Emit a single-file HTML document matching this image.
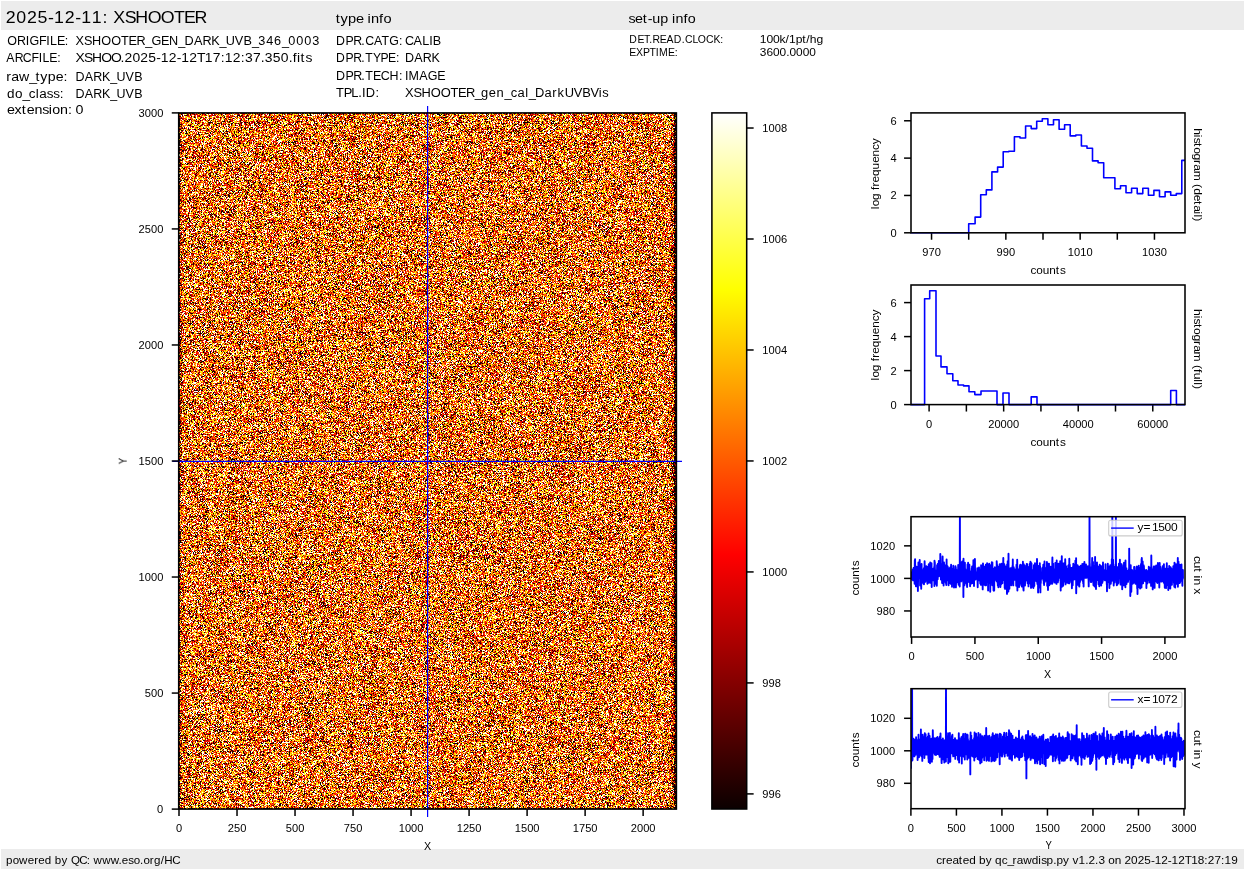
<!DOCTYPE html>
<html><head><meta charset="utf-8"><title>qc rawdisp</title>
<style>
html,body{margin:0;padding:0;background:#fff;overflow:hidden;}
svg{position:absolute;left:0;top:0;display:block;will-change:transform;}
text{font-family:"Liberation Sans",sans-serif;fill:#000;font-variant-ligatures:none;font-kerning:none;}
</style></head><body>
<canvas id="img" width="497" height="696" style="position:absolute;left:179px;top:113px;width:497px;height:696px;display:block;background:#d77c33"></canvas>
<svg width="1245" height="870" viewBox="0 0 1245 870">
<rect x="1.00" y="1.00" width="1243.00" height="29.00" fill="#ececec" stroke="none" stroke-width="0.00"/>
<rect x="1.00" y="849.00" width="1243.00" height="20.00" fill="#ececec" stroke="none" stroke-width="0.00"/>
<text x="0.00 9.68 19.37 29.05 38.74 44.23 53.91 63.60 69.09 78.77 88.46 93.58 98.42 108.85 118.51 129.96 141.94 153.92 163.22 172.83" y="0" font-size="16.30" transform="translate(5.80 22.80) translate(-0.00 0) scale(1.0922 1)">2025-12-11: XSHOOTER</text>
<text x="0.00 4.39 11.03 18.14 25.03 28.60 31.71 38.81 42.76" y="0" font-size="13.12" transform="translate(335.70 23.00) translate(-0.00 0) scale(1.1154 1)">type info</text>
<text x="0.00 5.97 13.01 17.50 21.64 28.90 36.17 39.81 42.99 50.25 54.28" y="0" font-size="13.12" transform="translate(628.60 22.70) translate(-0.00 0) scale(1.0914 1)">set-up info</text>
<text x="0.00 10.33 19.44 23.31 33.47 41.02 44.89 52.20 60.48" y="0" font-size="13.12" transform="translate(7.20 44.70) translate(-0.00 0) scale(0.9529 1)">ORIGFILE:</text>
<text x="0.00 8.86 17.06 26.78 36.96 47.13 55.03 63.20 72.18 78.65 88.66 96.83 106.50 112.97 122.66 131.50 140.49 148.96 155.43 164.89 173.73 182.60 189.07 197.29 205.52 213.74 220.21 228.43 236.66 244.88" y="0" font-size="13.12" transform="translate(75.40 44.70) translate(-0.00 0) scale(0.9669 1)">XSHOOTER_GEN_DARK_UVB_346_0003</text>
<text x="0.00 9.14 17.75 27.07 34.76 38.69 46.14 54.57" y="0" font-size="13.12" transform="translate(6.20 61.80) translate(-0.00 0) scale(0.9359 1)">ARCFILE:</text>
<text x="0.00 8.08 15.57 24.44 33.73 42.54 46.29 53.80 61.30 68.81 76.31 80.57 88.08 95.58 99.84 107.34 114.85 122.06 129.56 137.07 141.04 148.55 156.05 160.03 167.53 175.04 178.79 186.30 193.80 201.31 205.06 209.21 212.49 217.11" y="0" font-size="13.12" transform="translate(75.40 61.80) translate(-0.00 0) scale(1.0596 1)">XSHOO.2025-12-12T17:12:37.350.fits</text>
<text x="0.00 4.76 11.86 21.33 27.12 31.67 38.52 45.87 53.00" y="0" font-size="13.12" transform="translate(6.20 80.50) translate(-0.00 0) scale(1.0792 1)">raw_type:</text>
<text x="0.00 9.85 18.83 27.95 36.56 43.12 52.73 61.71" y="0" font-size="13.12" transform="translate(75.40 80.50) translate(-0.00 0) scale(0.9521 1)">DARK_UVB</text>
<text x="0.00 7.71 15.14 21.21 27.89 31.26 38.70 45.03 51.36" y="0" font-size="13.12" transform="translate(7.00 97.80) translate(-0.00 0) scale(1.0293 1)">do_class:</text>
<text x="0.00 9.85 18.83 27.95 36.56 43.12 52.73 61.71" y="0" font-size="13.12" transform="translate(75.40 97.80) translate(-0.00 0) scale(0.9521 1)">DARK_UVB</text>
<text x="0.00 6.83 13.63 18.13 25.19 32.47 38.45 41.64 48.66 55.93" y="0" font-size="13.12" transform="translate(7.00 113.50) translate(-0.00 0) scale(1.0889 1)">extension:</text>
<text x="0.00" y="0" font-size="13.12" transform="translate(75.40 113.50) translate(-0.00 0) scale(1.0895 1)">0</text>
<text x="0.00 10.23 18.25 26.95 31.18 40.46 48.49 56.61 66.91" y="0" font-size="13.12" transform="translate(336.00 44.70) translate(-0.00 0) scale(0.9405 1)">DPR.CATG:</text>
<text x="0.00 9.07 17.95 25.19 29.02" y="0" font-size="13.12" transform="translate(404.90 44.70) translate(-0.00 0) scale(0.9624 1)">CALIB</text>
<text x="0.00 10.37 18.50 27.32 31.60 39.83 48.06 56.19 64.70" y="0" font-size="13.12" transform="translate(336.00 61.80) translate(-0.00 0) scale(0.9278 1)">DPR.TYPE:</text>
<text x="0.00 9.81 18.76 27.85" y="0" font-size="13.12" transform="translate(404.90 61.80) translate(-0.00 0) scale(0.9554 1)">DARK</text>
<text x="0.00 10.13 18.05 26.66 30.84 38.88 47.19 56.37 66.25" y="0" font-size="13.12" transform="translate(336.00 80.00) translate(-0.00 0) scale(0.9506 1)">DPR.TECH:</text>
<text x="0.00 3.86 15.16 23.85 33.99" y="0" font-size="13.12" transform="translate(404.90 80.00) translate(-0.00 0) scale(0.9549 1)">IMAGE</text>
<text x="0.00 7.79 15.47 22.57 26.62 30.38 40.20" y="0" font-size="13.12" transform="translate(336.00 97.30) translate(-0.00 0) scale(0.9808 1)">TPL.ID:</text>
<text x="0.00 8.70 16.76 26.31 36.31 46.30 54.06 62.08 70.91 77.26 85.32 93.13 101.18 107.53 114.51 122.30 125.83 132.18 141.95 149.74 154.96 162.31 171.61 180.30 188.63 197.06 200.59" y="0" font-size="13.12" transform="translate(404.90 97.30) translate(-0.00 0) scale(0.9843 1)">XSHOOTER_gen_cal_DarkUVBVis</text>
<text x="0.00 8.54 15.54 20.99 24.52 32.22 39.22 46.81 55.34 58.87 66.61 72.39 81.11 88.85 96.12" y="0" font-size="11.03" transform="translate(629.30 42.90) translate(-0.00 0) scale(0.9472 1)">DET.READ.CLOCK:</text>
<text x="0.00 5.95 11.89 17.84 23.25 26.39 32.34 38.27 41.93 45.08 51.01" y="0" font-size="10.92" transform="translate(759.80 43.00) translate(-0.00 0) scale(1.1103 1)">100k/1pt/hg</text>
<text x="0.00 6.98 14.55 21.21 27.96 31.22 40.76 47.74" y="0" font-size="11.03" transform="translate(629.30 55.80) translate(-0.00 0) scale(0.9503 1)">EXPTIME:</text>
<text x="0.00 6.06 12.12 18.18 24.23 27.26 33.32 39.38 45.44" y="0" font-size="10.92" transform="translate(759.80 55.90) translate(-0.00 0) scale(1.0895 1)">3600.0000</text>
<text x="0.00 6.30 12.37 20.48 26.58 30.42 36.53 42.83 45.98 52.28 58.15 61.30 69.11 76.04 79.38 82.53 90.65 98.76 105.92 109.07 115.18 120.34 126.29 129.45 135.52 139.48 145.77 149.12 156.58" y="0" font-size="10.92" transform="translate(6.00 864.10) translate(-0.00 0) scale(1.0615 1)">powered by QC: www.eso.org/HC</text>
<text x="0.00 5.28 9.00 14.91 20.80 24.57 30.48 36.57 39.63 45.73 51.41 54.47 60.57 65.85 70.65 74.60 80.49 88.35 94.44 97.11 102.12 108.22 111.27 117.37 123.06 126.11 131.79 137.91 140.96 147.07 150.13 156.24 159.29 165.17 171.26 174.31 180.43 186.54 192.65 198.76 202.23 208.34 214.46 217.92 224.04 230.15 236.02 242.13 248.24 251.48 257.59 263.70 266.94 273.05" y="0" font-size="10.92" transform="translate(1238.50 864.10) translate(-302.22 0) scale(1.0799 1)">created by qc_rawdisp.py v1.2.3 on 2025-12-12T18:27:19</text>
<line x1="427.60" y1="106.00" x2="427.60" y2="817.00" stroke="#0000ff" stroke-width="1.20"/>
<line x1="172.40" y1="461.30" x2="682.00" y2="461.30" stroke="#0000ff" stroke-width="1.20"/>
<rect x="178.70" y="112.90" width="497.70" height="696.20" fill="none" stroke="#000" stroke-width="1.55"/>
<line x1="171.76" y1="809.10" x2="178.70" y2="809.10" stroke="#000" stroke-width="1.50"/>
<text x="0.00" y="0" font-size="10.21" transform="translate(163.30 812.70) translate(-6.18 0) scale(1.0895 1)">0</text>
<line x1="171.76" y1="693.07" x2="178.70" y2="693.07" stroke="#000" stroke-width="1.50"/>
<text x="0.00 5.69 11.39" y="0" font-size="10.21" transform="translate(163.30 696.67) translate(-18.55 0) scale(1.0895 1)">500</text>
<line x1="171.76" y1="577.03" x2="178.70" y2="577.03" stroke="#000" stroke-width="1.50"/>
<text x="0.00 5.69 11.39 17.08" y="0" font-size="10.21" transform="translate(163.30 580.63) translate(-24.74 0) scale(1.0895 1)">1000</text>
<line x1="171.76" y1="461.00" x2="178.70" y2="461.00" stroke="#000" stroke-width="1.50"/>
<text x="0.00 5.69 11.39 17.08" y="0" font-size="10.21" transform="translate(163.30 464.60) translate(-24.74 0) scale(1.0895 1)">1500</text>
<line x1="171.76" y1="344.97" x2="178.70" y2="344.97" stroke="#000" stroke-width="1.50"/>
<text x="0.00 5.69 11.39 17.08" y="0" font-size="10.21" transform="translate(163.30 348.57) translate(-24.74 0) scale(1.0895 1)">2000</text>
<line x1="171.76" y1="228.93" x2="178.70" y2="228.93" stroke="#000" stroke-width="1.50"/>
<text x="0.00 5.69 11.39 17.08" y="0" font-size="10.21" transform="translate(163.30 232.53) translate(-24.74 0) scale(1.0895 1)">2500</text>
<line x1="171.76" y1="112.90" x2="178.70" y2="112.90" stroke="#000" stroke-width="1.50"/>
<text x="0.00 5.69 11.39 17.08" y="0" font-size="10.21" transform="translate(163.30 116.50) translate(-24.74 0) scale(1.0895 1)">3000</text>
<line x1="179.00" y1="809.10" x2="179.00" y2="816.04" stroke="#000" stroke-width="1.50"/>
<text x="0.00" y="0" font-size="10.21" transform="translate(179.00 831.70) translate(-3.09 0) scale(1.0895 1)">0</text>
<line x1="237.02" y1="809.10" x2="237.02" y2="816.04" stroke="#000" stroke-width="1.50"/>
<text x="0.00 5.69 11.39" y="0" font-size="10.21" transform="translate(237.02 831.70) translate(-9.28 0) scale(1.0895 1)">250</text>
<line x1="295.03" y1="809.10" x2="295.03" y2="816.04" stroke="#000" stroke-width="1.50"/>
<text x="0.00 5.69 11.39" y="0" font-size="10.21" transform="translate(295.03 831.70) translate(-9.28 0) scale(1.0895 1)">500</text>
<line x1="353.05" y1="809.10" x2="353.05" y2="816.04" stroke="#000" stroke-width="1.50"/>
<text x="0.00 5.69 11.39" y="0" font-size="10.21" transform="translate(353.05 831.70) translate(-9.28 0) scale(1.0895 1)">750</text>
<line x1="411.07" y1="809.10" x2="411.07" y2="816.04" stroke="#000" stroke-width="1.50"/>
<text x="0.00 5.69 11.39 17.08" y="0" font-size="10.21" transform="translate(411.07 831.70) translate(-12.37 0) scale(1.0895 1)">1000</text>
<line x1="469.08" y1="809.10" x2="469.08" y2="816.04" stroke="#000" stroke-width="1.50"/>
<text x="0.00 5.69 11.39 17.08" y="0" font-size="10.21" transform="translate(469.08 831.70) translate(-12.37 0) scale(1.0895 1)">1250</text>
<line x1="527.10" y1="809.10" x2="527.10" y2="816.04" stroke="#000" stroke-width="1.50"/>
<text x="0.00 5.69 11.39 17.08" y="0" font-size="10.21" transform="translate(527.10 831.70) translate(-12.37 0) scale(1.0895 1)">1500</text>
<line x1="585.12" y1="809.10" x2="585.12" y2="816.04" stroke="#000" stroke-width="1.50"/>
<text x="0.00 5.69 11.39 17.08" y="0" font-size="10.21" transform="translate(585.12 831.70) translate(-12.37 0) scale(1.0895 1)">1750</text>
<line x1="643.13" y1="809.10" x2="643.13" y2="816.04" stroke="#000" stroke-width="1.50"/>
<text x="0.00 5.69 11.39 17.08" y="0" font-size="10.21" transform="translate(643.13 831.70) translate(-12.37 0) scale(1.0895 1)">2000</text>
<text x="0.00" y="0" font-size="10.92" transform="translate(427.50 850.00) translate(-3.56 0) scale(0.9781 1)">X</text>
<text x="0.00" y="0" font-size="10.92" transform="translate(126.70 461.00) rotate(-90) translate(-3.18 0) scale(0.8721 1)">Y</text>
<defs><linearGradient id="hot" x1="0" y1="1" x2="0" y2="0"><stop offset="0" stop-color="rgb(11,0,0)"/><stop offset="0.365079" stop-color="rgb(255,0,0)"/><stop offset="0.746032" stop-color="rgb(255,255,0)"/><stop offset="1" stop-color="rgb(255,255,255)"/></linearGradient></defs>
<rect x="711.90" y="112.90" width="34.80" height="696.10" fill="url(#hot)" stroke="#000" stroke-width="1.55"/>
<line x1="746.70" y1="793.90" x2="753.64" y2="793.90" stroke="#000" stroke-width="1.50"/>
<text x="0.00 5.69 11.39" y="0" font-size="10.21" transform="translate(762.30 797.50) translate(-0.00 0) scale(1.0895 1)">996</text>
<line x1="746.70" y1="682.92" x2="753.64" y2="682.92" stroke="#000" stroke-width="1.50"/>
<text x="0.00 5.69 11.39" y="0" font-size="10.21" transform="translate(762.30 686.52) translate(-0.00 0) scale(1.0895 1)">998</text>
<line x1="746.70" y1="571.94" x2="753.64" y2="571.94" stroke="#000" stroke-width="1.50"/>
<text x="0.00 5.69 11.39 17.08" y="0" font-size="10.21" transform="translate(762.30 575.54) translate(-0.00 0) scale(1.0895 1)">1000</text>
<line x1="746.70" y1="460.96" x2="753.64" y2="460.96" stroke="#000" stroke-width="1.50"/>
<text x="0.00 5.69 11.39 17.08" y="0" font-size="10.21" transform="translate(762.30 464.56) translate(-0.00 0) scale(1.0895 1)">1002</text>
<line x1="746.70" y1="349.98" x2="753.64" y2="349.98" stroke="#000" stroke-width="1.50"/>
<text x="0.00 5.69 11.39 17.08" y="0" font-size="10.21" transform="translate(762.30 353.58) translate(-0.00 0) scale(1.0895 1)">1004</text>
<line x1="746.70" y1="239.00" x2="753.64" y2="239.00" stroke="#000" stroke-width="1.50"/>
<text x="0.00 5.69 11.39 17.08" y="0" font-size="10.21" transform="translate(762.30 242.60) translate(-0.00 0) scale(1.0895 1)">1006</text>
<line x1="746.70" y1="128.02" x2="753.64" y2="128.02" stroke="#000" stroke-width="1.50"/>
<text x="0.00 5.69 11.39 17.08" y="0" font-size="10.21" transform="translate(762.30 131.62) translate(-0.00 0) scale(1.0895 1)">1008</text>
<line x1="931.55" y1="232.80" x2="931.55" y2="239.74" stroke="#000" stroke-width="1.50"/>
<text x="0.00 5.69 11.39" y="0" font-size="10.21" transform="translate(931.55 255.80) translate(-9.28 0) scale(1.0895 1)">970</text>
<line x1="968.70" y1="232.80" x2="968.70" y2="239.74" stroke="#000" stroke-width="1.50"/>
<line x1="1005.85" y1="232.80" x2="1005.85" y2="239.74" stroke="#000" stroke-width="1.50"/>
<text x="0.00 5.69 11.39" y="0" font-size="10.21" transform="translate(1005.85 255.80) translate(-9.28 0) scale(1.0895 1)">990</text>
<line x1="1043.00" y1="232.80" x2="1043.00" y2="239.74" stroke="#000" stroke-width="1.50"/>
<line x1="1080.15" y1="232.80" x2="1080.15" y2="239.74" stroke="#000" stroke-width="1.50"/>
<text x="0.00 5.69 11.39 17.08" y="0" font-size="10.21" transform="translate(1080.15 255.80) translate(-12.37 0) scale(1.0895 1)">1010</text>
<line x1="1117.30" y1="232.80" x2="1117.30" y2="239.74" stroke="#000" stroke-width="1.50"/>
<line x1="1154.45" y1="232.80" x2="1154.45" y2="239.74" stroke="#000" stroke-width="1.50"/>
<text x="0.00 5.69 11.39 17.08" y="0" font-size="10.21" transform="translate(1154.45 255.80) translate(-12.37 0) scale(1.0895 1)">1030</text>
<line x1="904.06" y1="232.80" x2="911.00" y2="232.80" stroke="#000" stroke-width="1.50"/>
<text x="0.00" y="0" font-size="10.21" transform="translate(896.60 236.70) translate(-6.18 0) scale(1.0895 1)">0</text>
<line x1="904.06" y1="195.46" x2="911.00" y2="195.46" stroke="#000" stroke-width="1.50"/>
<text x="0.00" y="0" font-size="10.21" transform="translate(896.60 199.36) translate(-6.18 0) scale(1.0895 1)">2</text>
<line x1="904.06" y1="158.12" x2="911.00" y2="158.12" stroke="#000" stroke-width="1.50"/>
<text x="0.00" y="0" font-size="10.21" transform="translate(896.60 162.02) translate(-6.18 0) scale(1.0895 1)">4</text>
<line x1="904.06" y1="120.78" x2="911.00" y2="120.78" stroke="#000" stroke-width="1.50"/>
<text x="0.00" y="0" font-size="10.21" transform="translate(896.60 124.68) translate(-6.18 0) scale(1.0895 1)">6</text>
<text x="0.00 5.28 11.16 17.24 23.33 27.09" y="0" font-size="10.92" transform="translate(1048.00 274.00) translate(-17.38 0) scale(1.0804 1)">counts</text>
<text x="0.00 2.65 8.49 14.54 17.57 20.93 24.62 30.49 36.54 42.59 48.45 54.50 59.74" y="0" font-size="10.92" transform="translate(879.30 173.50) rotate(-90) translate(-35.66 0) scale(1.0878 1)">log frequency</text>
<text x="0.00 5.94 8.55 13.43 17.10 22.84 28.79 32.64 38.39 47.52 50.50 54.15 60.10 65.87 69.55 75.29 77.89 80.50" y="0" font-size="10.92" transform="translate(1194.00 174.90) rotate(90) translate(-46.69 0) scale(1.1068 1)">histogram (detail)</text>
<line x1="929.10" y1="404.60" x2="929.10" y2="411.54" stroke="#000" stroke-width="1.50"/>
<text x="0.00" y="0" font-size="10.21" transform="translate(929.10 428.10) translate(-3.09 0) scale(1.0895 1)">0</text>
<line x1="966.38" y1="404.60" x2="966.38" y2="411.54" stroke="#000" stroke-width="1.50"/>
<line x1="1003.66" y1="404.60" x2="1003.66" y2="411.54" stroke="#000" stroke-width="1.50"/>
<text x="0.00 5.69 11.39 17.08 22.77" y="0" font-size="10.21" transform="translate(1003.66 428.10) translate(-15.46 0) scale(1.0895 1)">20000</text>
<line x1="1040.94" y1="404.60" x2="1040.94" y2="411.54" stroke="#000" stroke-width="1.50"/>
<line x1="1078.22" y1="404.60" x2="1078.22" y2="411.54" stroke="#000" stroke-width="1.50"/>
<text x="0.00 5.69 11.39 17.08 22.77" y="0" font-size="10.21" transform="translate(1078.22 428.10) translate(-15.46 0) scale(1.0895 1)">40000</text>
<line x1="1115.50" y1="404.60" x2="1115.50" y2="411.54" stroke="#000" stroke-width="1.50"/>
<line x1="1152.78" y1="404.60" x2="1152.78" y2="411.54" stroke="#000" stroke-width="1.50"/>
<text x="0.00 5.69 11.39 17.08 22.77" y="0" font-size="10.21" transform="translate(1152.78 428.10) translate(-15.46 0) scale(1.0895 1)">60000</text>
<line x1="904.06" y1="404.60" x2="911.00" y2="404.60" stroke="#000" stroke-width="1.50"/>
<text x="0.00" y="0" font-size="10.21" transform="translate(896.60 408.50) translate(-6.18 0) scale(1.0895 1)">0</text>
<line x1="904.06" y1="370.60" x2="911.00" y2="370.60" stroke="#000" stroke-width="1.50"/>
<text x="0.00" y="0" font-size="10.21" transform="translate(896.60 374.50) translate(-6.18 0) scale(1.0895 1)">2</text>
<line x1="904.06" y1="336.60" x2="911.00" y2="336.60" stroke="#000" stroke-width="1.50"/>
<text x="0.00" y="0" font-size="10.21" transform="translate(896.60 340.50) translate(-6.18 0) scale(1.0895 1)">4</text>
<line x1="904.06" y1="302.60" x2="911.00" y2="302.60" stroke="#000" stroke-width="1.50"/>
<text x="0.00" y="0" font-size="10.21" transform="translate(896.60 306.50) translate(-6.18 0) scale(1.0895 1)">6</text>
<text x="0.00 5.28 11.16 17.24 23.33 27.09" y="0" font-size="10.92" transform="translate(1048.00 446.00) translate(-17.38 0) scale(1.0804 1)">counts</text>
<text x="0.00 2.65 8.49 14.54 17.57 20.93 24.62 30.49 36.54 42.59 48.45 54.50 59.74" y="0" font-size="10.92" transform="translate(879.30 344.80) rotate(-90) translate(-35.66 0) scale(1.0878 1)">log frequency</text>
<text x="0.00 5.92 8.52 13.39 17.05 22.77 28.70 32.54 38.27 47.37 50.34 53.99 57.28 63.20 65.80 68.39" y="0" font-size="10.92" transform="translate(1194.00 349.20) rotate(90) translate(-40.09 0) scale(1.1102 1)">histogram (full)</text>
<line x1="911.60" y1="637.00" x2="911.60" y2="643.94" stroke="#000" stroke-width="1.50"/>
<text x="0.00" y="0" font-size="10.21" transform="translate(911.60 660.40) translate(-3.09 0) scale(1.0895 1)">0</text>
<line x1="974.93" y1="637.00" x2="974.93" y2="643.94" stroke="#000" stroke-width="1.50"/>
<text x="0.00 5.69 11.39" y="0" font-size="10.21" transform="translate(974.93 660.40) translate(-9.28 0) scale(1.0895 1)">500</text>
<line x1="1038.25" y1="637.00" x2="1038.25" y2="643.94" stroke="#000" stroke-width="1.50"/>
<text x="0.00 5.69 11.39 17.08" y="0" font-size="10.21" transform="translate(1038.25 660.40) translate(-12.37 0) scale(1.0895 1)">1000</text>
<line x1="1101.58" y1="637.00" x2="1101.58" y2="643.94" stroke="#000" stroke-width="1.50"/>
<text x="0.00 5.69 11.39 17.08" y="0" font-size="10.21" transform="translate(1101.58 660.40) translate(-12.37 0) scale(1.0895 1)">1500</text>
<line x1="1164.90" y1="637.00" x2="1164.90" y2="643.94" stroke="#000" stroke-width="1.50"/>
<text x="0.00 5.69 11.39 17.08" y="0" font-size="10.21" transform="translate(1164.90 660.40) translate(-12.37 0) scale(1.0895 1)">2000</text>
<line x1="904.06" y1="610.95" x2="911.00" y2="610.95" stroke="#000" stroke-width="1.50"/>
<text x="0.00 5.69 11.39" y="0" font-size="10.21" transform="translate(895.10 615.05) translate(-18.55 0) scale(1.0895 1)">980</text>
<line x1="904.06" y1="578.40" x2="911.00" y2="578.40" stroke="#000" stroke-width="1.50"/>
<text x="0.00 5.69 11.39 17.08" y="0" font-size="10.21" transform="translate(895.10 582.50) translate(-24.74 0) scale(1.0895 1)">1000</text>
<line x1="904.06" y1="545.85" x2="911.00" y2="545.85" stroke="#000" stroke-width="1.50"/>
<text x="0.00 5.69 11.39 17.08" y="0" font-size="10.21" transform="translate(895.10 549.95) translate(-24.74 0) scale(1.0895 1)">1020</text>
<text x="0.00" y="0" font-size="10.92" transform="translate(1047.50 678.30) translate(-3.56 0) scale(0.9781 1)">X</text>
<text x="0.00 5.28 11.16 17.24 23.33 27.09" y="0" font-size="10.92" transform="translate(859.30 578.00) rotate(-90) translate(-17.38 0) scale(1.0804 1)">counts</text>
<text x="0.00 5.11 11.00 14.64 17.59 20.17 26.06 29.01" y="0" font-size="10.92" transform="translate(1194.00 575.20) rotate(90) translate(-19.32 0) scale(1.1167 1)">cut in x</text>
<line x1="910.90" y1="808.70" x2="910.90" y2="815.64" stroke="#000" stroke-width="1.50"/>
<text x="0.00" y="0" font-size="10.21" transform="translate(910.90 831.60) translate(-3.09 0) scale(1.0895 1)">0</text>
<line x1="956.41" y1="808.70" x2="956.41" y2="815.64" stroke="#000" stroke-width="1.50"/>
<text x="0.00 5.69 11.39" y="0" font-size="10.21" transform="translate(956.41 831.60) translate(-9.28 0) scale(1.0895 1)">500</text>
<line x1="1001.93" y1="808.70" x2="1001.93" y2="815.64" stroke="#000" stroke-width="1.50"/>
<text x="0.00 5.69 11.39 17.08" y="0" font-size="10.21" transform="translate(1001.93 831.60) translate(-12.37 0) scale(1.0895 1)">1000</text>
<line x1="1047.44" y1="808.70" x2="1047.44" y2="815.64" stroke="#000" stroke-width="1.50"/>
<text x="0.00 5.69 11.39 17.08" y="0" font-size="10.21" transform="translate(1047.44 831.60) translate(-12.37 0) scale(1.0895 1)">1500</text>
<line x1="1092.96" y1="808.70" x2="1092.96" y2="815.64" stroke="#000" stroke-width="1.50"/>
<text x="0.00 5.69 11.39 17.08" y="0" font-size="10.21" transform="translate(1092.96 831.60) translate(-12.37 0) scale(1.0895 1)">2000</text>
<line x1="1138.47" y1="808.70" x2="1138.47" y2="815.64" stroke="#000" stroke-width="1.50"/>
<text x="0.00 5.69 11.39 17.08" y="0" font-size="10.21" transform="translate(1138.47 831.60) translate(-12.37 0) scale(1.0895 1)">2500</text>
<line x1="1183.99" y1="808.70" x2="1183.99" y2="815.64" stroke="#000" stroke-width="1.50"/>
<text x="0.00 5.69 11.39 17.08" y="0" font-size="10.21" transform="translate(1183.99 831.60) translate(-12.37 0) scale(1.0895 1)">3000</text>
<line x1="904.06" y1="783.30" x2="911.00" y2="783.30" stroke="#000" stroke-width="1.50"/>
<text x="0.00 5.69 11.39" y="0" font-size="10.21" transform="translate(895.10 787.40) translate(-18.55 0) scale(1.0895 1)">980</text>
<line x1="904.06" y1="750.80" x2="911.00" y2="750.80" stroke="#000" stroke-width="1.50"/>
<text x="0.00 5.69 11.39 17.08" y="0" font-size="10.21" transform="translate(895.10 754.90) translate(-24.74 0) scale(1.0895 1)">1000</text>
<line x1="904.06" y1="718.30" x2="911.00" y2="718.30" stroke="#000" stroke-width="1.50"/>
<text x="0.00 5.69 11.39 17.08" y="0" font-size="10.21" transform="translate(895.10 722.40) translate(-24.74 0) scale(1.0895 1)">1020</text>
<text x="0.00" y="0" font-size="10.92" transform="translate(1048.80 849.00) translate(-3.18 0) scale(0.8721 1)">Y</text>
<text x="0.00 5.28 11.16 17.24 23.33 27.09" y="0" font-size="10.92" transform="translate(859.30 750.00) rotate(-90) translate(-17.38 0) scale(1.0804 1)">counts</text>
<text x="0.00 5.11 11.00 14.64 17.59 20.17 26.06 29.01" y="0" font-size="10.92" transform="translate(1194.00 749.40) rotate(90) translate(-19.32 0) scale(1.1167 1)">cut in y</text>
<path d="M911.0 232.8 L968.7 232.8 L968.7 223.8 L975.1 223.8 L975.1 217.1 L980.7 217.1 L980.7 194.7 L986.3 194.7 L986.3 189.9 L991.9 189.9 L991.9 171.9 L997.6 171.9 L997.6 167.1 L1003.2 167.1 L1003.2 151.8 L1008.8 151.8 L1008.8 151.2 L1014.4 151.2 L1014.4 136.8 L1020.0 136.8 L1020.0 138.0 L1025.6 138.0 L1025.6 126.0 L1031.2 126.0 L1031.2 128.6 L1036.7 128.6 L1036.7 121.2 L1042.3 121.2 L1042.3 118.7 L1047.9 118.7 L1047.9 124.7 L1053.5 124.7 L1053.5 119.7 L1059.1 119.7 L1059.1 129.2 L1064.6 129.2 L1064.6 124.7 L1070.2 124.7 L1070.2 135.9 L1075.8 135.9 L1075.8 135.0 L1081.4 135.0 L1081.4 146.0 L1087.0 146.0 L1087.0 148.2 L1092.5 148.2 L1092.5 160.9 L1098.1 160.9 L1098.1 162.8 L1103.7 162.8 L1103.7 177.7 L1109.3 177.7 L1109.3 177.7 L1114.9 177.7 L1114.9 188.7 L1120.5 188.7 L1120.5 185.8 L1126.0 185.8 L1126.0 192.7 L1131.6 192.7 L1131.6 188.2 L1137.2 188.2 L1137.2 193.6 L1142.8 193.6 L1142.8 188.2 L1148.4 188.2 L1148.4 195.3 L1153.9 195.3 L1153.9 190.4 L1159.5 190.4 L1159.5 196.8 L1165.1 196.8 L1165.1 191.9 L1170.7 191.9 L1170.7 195.3 L1176.3 195.3 L1176.3 193.6 L1181.8 193.6 L1181.8 160.4 L1185.0 160.4" fill="none" stroke="#0000ff" stroke-width="1.6" stroke-linejoin="round"/>
<path d="M911.0 404.6 L924.6 404.6 L924.6 298.8 L929.7 298.8 L929.7 290.8 L936.0 290.8 L936.0 356.0 L941.0 356.0 L941.0 366.9 L947.0 366.9 L947.0 373.8 L952.8 373.8 L952.8 380.8 L958.0 380.8 L958.0 385.0 L963.6 385.0 L963.6 385.9 L969.0 385.9 L969.0 391.7 L974.8 391.7 L974.8 394.6 L981.0 394.6 L981.0 391.0 L997.0 391.0 L997.0 404.6 L1003.0 404.6 L1003.0 393.0 L1009.0 393.0 L1009.0 404.6 L1031.2 404.6 L1031.2 396.9 L1037.0 396.9 L1037.0 404.6 L1170.7 404.6 L1170.7 390.5 L1176.4 390.5 L1176.4 404.6 L1185.0 404.6" fill="none" stroke="#0000ff" stroke-width="1.6" stroke-linejoin="round"/>
<clipPath id="c3"><rect x="911.0" y="516.7" width="274.0" height="120.3"/></clipPath>
<path clip-path="url(#c3)" d="M911.6 575.5 L911.7 574.2 L911.9 572.2 L912.0 579.5 L912.1 577.5 L912.2 571.5 L912.4 578.2 L912.5 576.2 L912.6 569.7 L912.7 569.8 L912.9 578.4 L913.0 576.2 L913.1 580.4 L913.2 576.7 L913.4 571.9 L913.5 575.4 L913.6 568.0 L913.8 575.6 L913.9 578.3 L914.0 574.7 L914.1 575.5 L914.3 578.8 L914.4 575.4 L914.5 573.5 L914.6 583.7 L914.8 560.2 L914.9 564.0 L915.0 576.1 L915.1 559.2 L915.3 574.3 L915.4 567.0 L915.5 582.8 L915.7 573.4 L915.8 572.0 L915.9 586.3 L916.0 567.7 L916.2 584.0 L916.3 579.7 L916.4 573.8 L916.5 566.8 L916.7 577.7 L916.8 586.4 L916.9 573.0 L917.0 579.1 L917.2 571.5 L917.3 577.9 L917.4 572.0 L917.6 582.5 L917.7 571.3 L917.8 566.7 L917.9 591.0 L918.1 576.5 L918.2 570.9 L918.3 573.7 L918.4 562.4 L918.6 575.9 L918.7 571.9 L918.8 570.9 L918.9 578.3 L919.1 575.6 L919.2 575.6 L919.3 572.8 L919.5 575.3 L919.6 577.2 L919.7 560.0 L919.8 575.2 L920.0 572.0 L920.1 585.5 L920.2 581.3 L920.3 567.4 L920.5 574.1 L920.6 582.1 L920.7 566.2 L920.8 571.2 L921.0 578.8 L921.1 566.7 L921.2 588.8 L921.4 567.0 L921.5 571.3 L921.6 564.0 L921.7 577.3 L921.9 582.5 L922.0 571.2 L922.1 572.8 L922.2 570.0 L922.4 575.6 L922.5 571.9 L922.6 570.1 L922.7 582.3 L922.9 576.5 L923.0 574.1 L923.1 574.6 L923.3 578.8 L923.4 574.6 L923.5 583.8 L923.6 581.9 L923.8 568.3 L923.9 570.3 L924.0 584.2 L924.1 568.3 L924.3 568.2 L924.4 576.6 L924.5 574.1 L924.6 561.3 L924.8 568.9 L924.9 573.7 L925.0 577.9 L925.2 572.2 L925.3 578.0 L925.4 581.8 L925.5 574.6 L925.7 567.9 L925.8 576.7 L925.9 580.0 L926.0 568.1 L926.2 571.7 L926.3 571.6 L926.4 566.1 L926.5 573.6 L926.7 571.3 L926.8 570.1 L926.9 578.3 L927.1 576.8 L927.2 566.8 L927.3 578.0 L927.4 583.8 L927.6 573.1 L927.7 579.5 L927.8 580.2 L927.9 571.9 L928.1 583.1 L928.2 575.5 L928.3 576.3 L928.4 576.4 L928.6 581.7 L928.7 567.3 L928.8 564.1 L929.0 572.3 L929.1 577.2 L929.2 580.7 L929.3 579.5 L929.5 573.1 L929.6 575.3 L929.7 582.1 L929.8 574.8 L930.0 573.1 L930.1 582.9 L930.2 562.5 L930.3 578.7 L930.5 582.8 L930.6 573.2 L930.7 575.3 L930.9 578.0 L931.0 577.2 L931.1 577.9 L931.2 572.2 L931.4 582.8 L931.5 563.3 L931.6 576.6 L931.7 587.1 L931.9 569.8 L932.0 572.1 L932.1 574.3 L932.2 576.5 L932.4 573.7 L932.5 572.2 L932.6 572.7 L932.8 579.0 L932.9 575.6 L933.0 574.2 L933.1 568.7 L933.3 569.5 L933.4 573.1 L933.5 580.4 L933.6 575.4 L933.8 573.0 L933.9 571.7 L934.0 572.5 L934.1 572.4 L934.3 566.5 L934.4 586.0 L934.5 560.7 L934.7 577.4 L934.8 562.1 L934.9 568.0 L935.0 570.3 L935.2 583.7 L935.3 577.6 L935.4 581.4 L935.5 570.4 L935.7 574.0 L935.8 578.3 L935.9 583.2 L936.0 576.4 L936.2 573.9 L936.3 578.5 L936.4 575.9 L936.6 573.9 L936.7 581.5 L936.8 585.8 L936.9 581.9 L937.1 565.1 L937.2 575.3 L937.3 575.7 L937.4 576.6 L937.6 574.3 L937.7 579.2 L937.8 563.9 L937.9 568.7 L938.1 568.7 L938.2 571.7 L938.3 573.6 L938.4 571.9 L938.6 575.5 L938.7 567.6 L938.8 560.9 L939.0 576.3 L939.1 570.4 L939.2 568.4 L939.3 570.3 L939.5 570.4 L939.6 573.0 L939.7 572.8 L939.8 564.1 L940.0 570.1 L940.1 567.3 L940.2 573.6 L940.3 553.9 L940.5 559.9 L940.6 575.5 L940.7 568.0 L940.9 579.5 L941.0 566.2 L941.1 578.6 L941.2 569.0 L941.4 565.8 L941.5 574.0 L941.6 575.6 L941.7 570.8 L941.9 563.9 L942.0 573.7 L942.1 583.0 L942.2 571.0 L942.4 571.1 L942.5 573.0 L942.6 556.5 L942.8 573.7 L942.9 568.5 L943.0 578.2 L943.1 583.6 L943.3 583.4 L943.4 578.3 L943.5 565.1 L943.6 585.5 L943.8 573.4 L943.9 573.6 L944.0 562.4 L944.1 582.0 L944.3 579.1 L944.4 569.8 L944.5 577.4 L944.7 580.9 L944.8 570.9 L944.9 571.5 L945.0 577.4 L945.2 566.7 L945.3 569.7 L945.4 565.4 L945.5 568.4 L945.7 575.9 L945.8 583.0 L945.9 578.6 L946.0 571.9 L946.2 583.4 L946.3 585.0 L946.4 575.7 L946.6 559.4 L946.7 572.4 L946.8 566.6 L946.9 580.6 L947.1 571.9 L947.2 565.9 L947.3 568.2 L947.4 573.5 L947.6 572.9 L947.7 566.5 L947.8 574.7 L947.9 571.8 L948.1 573.3 L948.2 579.4 L948.3 575.8 L948.5 575.1 L948.6 585.2 L948.7 579.1 L948.8 573.4 L949.0 580.3 L949.1 568.5 L949.2 568.2 L949.3 576.5 L949.5 569.6 L949.6 573.0 L949.7 568.4 L949.8 577.4 L950.0 580.7 L950.1 581.0 L950.2 583.0 L950.4 571.5 L950.5 582.5 L950.6 567.0 L950.7 575.1 L950.9 583.9 L951.0 576.9 L951.1 564.7 L951.2 576.5 L951.4 571.3 L951.5 576.6 L951.6 583.6 L951.7 569.9 L951.9 576.0 L952.0 586.8 L952.1 575.2 L952.3 569.0 L952.4 580.2 L952.5 571.3 L952.6 569.3 L952.8 571.1 L952.9 581.3 L953.0 583.0 L953.1 573.5 L953.3 565.7 L953.4 574.6 L953.5 578.4 L953.6 570.8 L953.8 574.3 L953.9 580.9 L954.0 587.6 L954.2 578.9 L954.3 571.0 L954.4 578.6 L954.5 578.7 L954.7 569.9 L954.8 573.5 L954.9 580.5 L955.0 578.9 L955.2 578.4 L955.3 569.3 L955.4 567.4 L955.5 566.2 L955.7 581.7 L955.8 567.6 L955.9 587.4 L956.1 580.4 L956.2 573.7 L956.3 578.0 L956.4 575.6 L956.6 574.4 L956.7 574.5 L956.8 579.4 L956.9 570.1 L957.1 575.3 L957.2 582.2 L957.3 575.0 L957.4 570.6 L957.6 582.4 L957.7 570.5 L957.8 578.5 L958.0 571.2 L958.1 572.3 L958.2 564.9 L958.3 571.7 L958.5 578.9 L958.6 584.7 L958.7 574.0 L958.8 578.0 L959.0 565.9 L959.1 570.9 L959.2 568.8 L959.3 574.6 L959.5 582.7 L959.6 579.6 L959.7 586.5 L959.9 514.7 L960.0 569.1 L960.1 575.5 L960.2 575.2 L960.4 573.4 L960.5 569.6 L960.6 569.8 L960.7 577.7 L960.9 578.4 L961.0 566.6 L961.1 568.9 L961.2 578.3 L961.4 581.4 L961.5 571.9 L961.6 571.3 L961.8 576.1 L961.9 562.0 L962.0 572.8 L962.1 575.6 L962.3 561.4 L962.4 580.2 L962.5 573.4 L962.6 579.2 L962.8 563.1 L962.9 577.1 L963.0 573.5 L963.1 573.3 L963.3 580.8 L963.4 597.1 L963.5 558.7 L963.7 572.2 L963.8 578.3 L963.9 581.6 L964.0 577.7 L964.2 574.5 L964.3 574.8 L964.4 585.4 L964.5 563.0 L964.7 573.0 L964.8 583.9 L964.9 562.7 L965.0 577.1 L965.2 570.9 L965.3 572.7 L965.4 569.1 L965.6 571.2 L965.7 573.0 L965.8 582.8 L965.9 573.2 L966.1 577.9 L966.2 575.9 L966.3 571.0 L966.4 574.1 L966.6 571.8 L966.7 576.7 L966.8 578.0 L966.9 582.2 L967.1 587.0 L967.2 583.7 L967.3 575.0 L967.5 564.5 L967.6 580.9 L967.7 575.3 L967.8 578.2 L968.0 572.1 L968.1 562.8 L968.2 566.0 L968.3 577.2 L968.5 577.7 L968.6 573.3 L968.7 578.6 L968.8 579.2 L969.0 582.0 L969.1 572.7 L969.2 581.1 L969.4 564.7 L969.5 577.5 L969.6 577.8 L969.7 573.6 L969.9 574.8 L970.0 571.2 L970.1 586.3 L970.2 576.2 L970.4 575.1 L970.5 583.9 L970.6 579.4 L970.7 572.3 L970.9 571.4 L971.0 583.8 L971.1 579.0 L971.3 581.8 L971.4 572.5 L971.5 583.1 L971.6 575.2 L971.8 568.4 L971.9 576.6 L972.0 569.6 L972.1 566.4 L972.3 580.8 L972.4 580.0 L972.5 579.3 L972.6 577.7 L972.8 574.4 L972.9 583.2 L973.0 573.3 L973.2 579.2 L973.3 568.4 L973.4 560.3 L973.5 574.7 L973.7 560.7 L973.8 567.3 L973.9 571.4 L974.0 586.1 L974.2 573.2 L974.3 578.9 L974.4 568.4 L974.5 567.8 L974.7 573.2 L974.8 577.3 L974.9 558.9 L975.1 573.2 L975.2 570.4 L975.3 577.4 L975.4 572.0 L975.6 579.5 L975.7 574.1 L975.8 575.5 L975.9 578.3 L976.1 577.6 L976.2 575.6 L976.3 575.8 L976.4 576.5 L976.6 577.0 L976.7 577.0 L976.8 573.8 L977.0 577.5 L977.1 572.1 L977.2 578.1 L977.3 568.2 L977.5 579.6 L977.6 582.4 L977.7 587.3 L977.8 576.5 L978.0 577.7 L978.1 572.7 L978.2 577.1 L978.3 580.3 L978.5 568.7 L978.6 577.2 L978.7 568.7 L978.9 574.1 L979.0 567.5 L979.1 576.5 L979.2 571.9 L979.4 580.3 L979.5 576.7 L979.6 576.3 L979.7 573.8 L979.9 571.7 L980.0 579.4 L980.1 571.3 L980.2 583.5 L980.4 578.0 L980.5 574.3 L980.6 569.5 L980.8 571.4 L980.9 574.1 L981.0 584.9 L981.1 565.2 L981.3 572.1 L981.4 568.5 L981.5 566.0 L981.6 574.0 L981.8 579.8 L981.9 571.9 L982.0 578.7 L982.1 571.3 L982.3 578.1 L982.4 572.4 L982.5 578.2 L982.7 589.4 L982.8 569.5 L982.9 578.1 L983.0 563.5 L983.2 573.8 L983.3 582.6 L983.4 572.7 L983.5 581.3 L983.7 584.5 L983.8 581.6 L983.9 575.4 L984.0 573.4 L984.2 573.3 L984.3 572.7 L984.4 571.4 L984.6 566.8 L984.7 577.7 L984.8 569.0 L984.9 573.7 L985.1 585.2 L985.2 568.2 L985.3 581.7 L985.4 570.4 L985.6 575.2 L985.7 568.9 L985.8 564.7 L985.9 569.2 L986.1 585.2 L986.2 573.9 L986.3 577.2 L986.5 575.9 L986.6 575.3 L986.7 569.0 L986.8 573.4 L987.0 580.5 L987.1 563.3 L987.2 577.1 L987.3 577.6 L987.5 582.1 L987.6 576.8 L987.7 580.2 L987.8 564.4 L988.0 566.9 L988.1 590.5 L988.2 570.5 L988.3 575.6 L988.5 583.1 L988.6 583.5 L988.7 570.3 L988.9 574.4 L989.0 568.6 L989.1 579.8 L989.2 563.8 L989.4 571.9 L989.5 575.6 L989.6 568.7 L989.7 573.7 L989.9 577.5 L990.0 581.0 L990.1 573.6 L990.2 591.7 L990.4 579.5 L990.5 583.0 L990.6 569.3 L990.8 567.9 L990.9 577.6 L991.0 577.7 L991.1 565.0 L991.3 573.1 L991.4 565.3 L991.5 575.1 L991.6 570.7 L991.8 562.1 L991.9 577.1 L992.0 569.2 L992.1 570.2 L992.3 585.3 L992.4 562.4 L992.5 580.3 L992.7 570.0 L992.8 574.6 L992.9 578.8 L993.0 577.0 L993.2 568.4 L993.3 583.2 L993.4 574.1 L993.5 590.3 L993.7 579.1 L993.8 590.8 L993.9 578.1 L994.0 573.9 L994.2 590.4 L994.3 576.3 L994.4 579.0 L994.6 578.4 L994.7 571.8 L994.8 572.6 L994.9 567.3 L995.1 567.5 L995.2 577.9 L995.3 568.5 L995.4 568.9 L995.6 575.6 L995.7 578.1 L995.8 579.6 L995.9 579.8 L996.1 570.1 L996.2 577.7 L996.3 573.5 L996.5 579.9 L996.6 581.1 L996.7 561.2 L996.8 563.3 L997.0 569.5 L997.1 575.1 L997.2 580.8 L997.3 565.1 L997.5 583.1 L997.6 575.0 L997.7 573.7 L997.8 585.5 L998.0 575.4 L998.1 567.2 L998.2 569.7 L998.4 587.2 L998.5 566.9 L998.6 583.4 L998.7 575.5 L998.9 575.9 L999.0 581.5 L999.1 567.0 L999.2 574.6 L999.4 572.3 L999.5 583.9 L999.6 580.9 L999.7 564.2 L999.9 574.9 L1000.0 576.2 L1000.1 574.1 L1000.3 580.5 L1000.4 587.1 L1000.5 583.0 L1000.6 575.6 L1000.8 569.9 L1000.9 571.5 L1001.0 584.5 L1001.1 581.1 L1001.3 580.2 L1001.4 563.7 L1001.5 581.7 L1001.6 579.0 L1001.8 571.6 L1001.9 565.1 L1002.0 570.2 L1002.2 569.5 L1002.3 564.7 L1002.4 583.2 L1002.5 570.6 L1002.7 576.1 L1002.8 568.6 L1002.9 578.8 L1003.0 567.6 L1003.2 562.7 L1003.3 558.0 L1003.4 580.0 L1003.5 577.6 L1003.7 571.0 L1003.8 565.5 L1003.9 579.3 L1004.1 565.3 L1004.2 579.4 L1004.3 564.2 L1004.4 575.7 L1004.6 568.4 L1004.7 588.0 L1004.8 587.9 L1004.9 568.4 L1005.1 588.9 L1005.2 566.1 L1005.3 583.6 L1005.4 577.1 L1005.6 568.7 L1005.7 574.3 L1005.8 574.8 L1006.0 573.7 L1006.1 576.6 L1006.2 570.0 L1006.3 570.8 L1006.5 571.5 L1006.6 571.8 L1006.7 578.1 L1006.8 580.9 L1007.0 593.9 L1007.1 564.4 L1007.2 574.1 L1007.3 571.9 L1007.5 571.5 L1007.6 579.8 L1007.7 561.1 L1007.9 572.6 L1008.0 576.7 L1008.1 574.0 L1008.2 577.3 L1008.4 591.6 L1008.5 553.8 L1008.6 572.4 L1008.7 576.8 L1008.9 580.9 L1009.0 577.4 L1009.1 580.5 L1009.2 586.1 L1009.4 588.8 L1009.5 580.0 L1009.6 571.6 L1009.8 577.0 L1009.9 570.6 L1010.0 573.1 L1010.1 584.7 L1010.3 575.2 L1010.4 568.2 L1010.5 583.0 L1010.6 579.6 L1010.8 581.9 L1010.9 578.4 L1011.0 580.1 L1011.1 581.1 L1011.3 585.2 L1011.4 568.2 L1011.5 582.8 L1011.7 575.8 L1011.8 576.9 L1011.9 578.0 L1012.0 568.3 L1012.2 576.2 L1012.3 570.6 L1012.4 583.4 L1012.5 565.9 L1012.7 576.3 L1012.8 559.5 L1012.9 567.8 L1013.0 574.4 L1013.2 576.6 L1013.3 585.4 L1013.4 571.4 L1013.6 574.4 L1013.7 567.1 L1013.8 571.0 L1013.9 569.2 L1014.1 571.0 L1014.2 575.3 L1014.3 571.7 L1014.4 579.6 L1014.6 569.7 L1014.7 579.9 L1014.8 577.5 L1014.9 569.4 L1015.1 572.2 L1015.2 574.8 L1015.3 575.2 L1015.5 575.9 L1015.6 574.8 L1015.7 571.8 L1015.8 577.9 L1016.0 577.4 L1016.1 575.3 L1016.2 585.7 L1016.3 578.0 L1016.5 564.8 L1016.6 580.5 L1016.7 574.0 L1016.8 575.2 L1017.0 573.9 L1017.1 576.6 L1017.2 559.7 L1017.4 590.5 L1017.5 576.5 L1017.6 583.4 L1017.7 574.9 L1017.9 577.4 L1018.0 572.8 L1018.1 576.8 L1018.2 574.3 L1018.4 569.5 L1018.5 577.1 L1018.6 580.7 L1018.7 580.5 L1018.9 569.6 L1019.0 574.4 L1019.1 587.1 L1019.3 571.7 L1019.4 579.0 L1019.5 571.9 L1019.6 573.7 L1019.8 566.6 L1019.9 567.5 L1020.0 565.2 L1020.1 569.1 L1020.3 564.7 L1020.4 574.5 L1020.5 574.5 L1020.6 565.3 L1020.8 574.0 L1020.9 584.1 L1021.0 573.5 L1021.2 574.1 L1021.3 585.2 L1021.4 565.1 L1021.5 579.6 L1021.7 573.5 L1021.8 586.5 L1021.9 572.4 L1022.0 573.8 L1022.2 571.4 L1022.3 568.7 L1022.4 578.0 L1022.5 579.9 L1022.7 572.7 L1022.8 574.2 L1022.9 561.7 L1023.1 573.0 L1023.2 579.4 L1023.3 576.9 L1023.4 589.1 L1023.6 590.6 L1023.7 565.6 L1023.8 564.2 L1023.9 568.0 L1024.1 571.7 L1024.2 578.7 L1024.3 575.5 L1024.4 569.5 L1024.6 566.9 L1024.7 565.7 L1024.8 578.3 L1025.0 585.5 L1025.1 577.8 L1025.2 578.6 L1025.3 570.4 L1025.5 572.0 L1025.6 574.3 L1025.7 575.9 L1025.8 580.3 L1026.0 575.9 L1026.1 576.1 L1026.2 569.0 L1026.3 578.0 L1026.5 576.8 L1026.6 567.8 L1026.7 564.0 L1026.9 574.5 L1027.0 580.8 L1027.1 574.6 L1027.2 566.0 L1027.4 564.2 L1027.5 579.4 L1027.6 583.3 L1027.7 571.4 L1027.9 581.1 L1028.0 566.7 L1028.1 576.2 L1028.2 574.8 L1028.4 580.7 L1028.5 586.4 L1028.6 578.5 L1028.8 574.3 L1028.9 576.1 L1029.0 570.6 L1029.1 569.0 L1029.3 583.6 L1029.4 576.3 L1029.5 569.4 L1029.6 569.7 L1029.8 569.7 L1029.9 563.8 L1030.0 576.3 L1030.1 572.3 L1030.3 575.7 L1030.4 561.8 L1030.5 581.1 L1030.7 573.4 L1030.8 577.8 L1030.9 562.4 L1031.0 587.9 L1031.2 575.1 L1031.3 582.5 L1031.4 582.0 L1031.5 563.5 L1031.7 579.3 L1031.8 578.0 L1031.9 573.6 L1032.0 574.1 L1032.2 576.3 L1032.3 579.9 L1032.4 570.9 L1032.6 570.5 L1032.7 586.9 L1032.8 571.7 L1032.9 578.0 L1033.1 574.1 L1033.2 570.0 L1033.3 583.2 L1033.4 588.0 L1033.6 578.6 L1033.7 580.0 L1033.8 571.0 L1033.9 565.2 L1034.1 571.3 L1034.2 586.1 L1034.3 585.6 L1034.5 567.9 L1034.6 574.3 L1034.7 580.9 L1034.8 572.1 L1035.0 563.1 L1035.1 571.4 L1035.2 565.7 L1035.3 572.2 L1035.5 577.3 L1035.6 568.3 L1035.7 572.3 L1035.8 578.4 L1036.0 579.8 L1036.1 575.0 L1036.2 580.9 L1036.4 579.9 L1036.5 576.1 L1036.6 577.2 L1036.7 581.1 L1036.9 581.8 L1037.0 559.0 L1037.1 567.6 L1037.2 567.8 L1037.4 584.0 L1037.5 572.9 L1037.6 582.1 L1037.7 571.4 L1037.9 576.6 L1038.0 575.4 L1038.1 592.5 L1038.2 566.0 L1038.4 571.0 L1038.5 571.1 L1038.6 575.3 L1038.8 587.6 L1038.9 579.7 L1039.0 575.0 L1039.1 570.2 L1039.3 577.0 L1039.4 586.0 L1039.5 565.8 L1039.6 578.0 L1039.8 563.3 L1039.9 570.6 L1040.0 576.5 L1040.1 566.5 L1040.3 577.9 L1040.4 592.4 L1040.5 578.1 L1040.7 575.8 L1040.8 582.9 L1040.9 575.3 L1041.0 574.6 L1041.2 578.9 L1041.3 576.6 L1041.4 575.3 L1041.5 573.3 L1041.7 574.8 L1041.8 578.6 L1041.9 575.7 L1042.0 575.7 L1042.2 568.1 L1042.3 574.8 L1042.4 569.6 L1042.6 577.4 L1042.7 567.5 L1042.8 570.4 L1042.9 575.9 L1043.1 573.8 L1043.2 573.0 L1043.3 564.8 L1043.4 580.4 L1043.6 572.9 L1043.7 577.9 L1043.8 583.7 L1043.9 571.2 L1044.1 585.0 L1044.2 576.7 L1044.3 569.8 L1044.5 561.5 L1044.6 582.2 L1044.7 579.5 L1044.8 580.7 L1045.0 578.3 L1045.1 570.8 L1045.2 574.3 L1045.3 577.3 L1045.5 574.3 L1045.6 578.2 L1045.7 577.0 L1045.8 577.3 L1046.0 580.7 L1046.1 577.4 L1046.2 578.9 L1046.4 567.8 L1046.5 567.9 L1046.6 572.6 L1046.7 578.6 L1046.9 561.9 L1047.0 571.7 L1047.1 574.4 L1047.2 585.8 L1047.4 572.9 L1047.5 581.2 L1047.6 563.4 L1047.7 578.2 L1047.9 574.1 L1048.0 590.1 L1048.1 567.6 L1048.3 579.2 L1048.4 566.5 L1048.5 571.6 L1048.6 575.9 L1048.8 574.6 L1048.9 579.4 L1049.0 563.6 L1049.1 585.3 L1049.3 585.3 L1049.4 574.5 L1049.5 578.8 L1049.6 575.1 L1049.8 576.6 L1049.9 571.0 L1050.0 578.6 L1050.2 572.7 L1050.3 575.0 L1050.4 574.8 L1050.5 577.7 L1050.7 566.8 L1050.8 583.8 L1050.9 583.0 L1051.0 575.3 L1051.2 573.5 L1051.3 568.6 L1051.4 570.8 L1051.5 569.4 L1051.7 568.7 L1051.8 567.6 L1051.9 580.8 L1052.1 574.4 L1052.2 583.8 L1052.3 561.5 L1052.4 557.5 L1052.6 580.5 L1052.7 576.4 L1052.8 572.6 L1052.9 567.9 L1053.1 563.6 L1053.2 576.8 L1053.3 571.7 L1053.4 570.2 L1053.6 575.9 L1053.7 580.9 L1053.8 577.1 L1054.0 570.6 L1054.1 569.9 L1054.2 572.7 L1054.3 582.6 L1054.5 573.9 L1054.6 575.6 L1054.7 569.3 L1054.8 570.3 L1055.0 578.9 L1055.1 579.9 L1055.2 576.6 L1055.3 562.9 L1055.5 569.0 L1055.6 582.2 L1055.7 567.5 L1055.9 566.7 L1056.0 582.9 L1056.1 581.3 L1056.2 575.4 L1056.4 583.0 L1056.5 583.9 L1056.6 566.4 L1056.7 560.4 L1056.9 581.9 L1057.0 576.1 L1057.1 570.4 L1057.2 571.2 L1057.4 565.5 L1057.5 570.0 L1057.6 575.7 L1057.8 582.4 L1057.9 572.1 L1058.0 581.8 L1058.1 570.5 L1058.3 580.6 L1058.4 568.4 L1058.5 563.7 L1058.6 576.2 L1058.8 568.0 L1058.9 576.2 L1059.0 572.1 L1059.1 571.1 L1059.3 573.4 L1059.4 563.6 L1059.5 573.3 L1059.7 566.4 L1059.8 568.5 L1059.9 577.7 L1060.0 573.6 L1060.2 561.1 L1060.3 572.2 L1060.4 575.0 L1060.5 566.9 L1060.7 590.5 L1060.8 576.4 L1060.9 568.8 L1061.0 573.0 L1061.2 570.4 L1061.3 573.8 L1061.4 581.6 L1061.6 576.9 L1061.7 568.9 L1061.8 556.2 L1061.9 586.8 L1062.1 576.8 L1062.2 570.0 L1062.3 576.0 L1062.4 563.3 L1062.6 571.1 L1062.7 577.0 L1062.8 570.0 L1062.9 571.1 L1063.1 568.6 L1063.2 585.7 L1063.3 568.2 L1063.5 576.8 L1063.6 572.7 L1063.7 574.1 L1063.8 572.5 L1064.0 580.6 L1064.1 572.1 L1064.2 570.0 L1064.3 562.9 L1064.5 566.1 L1064.6 581.6 L1064.7 571.4 L1064.8 572.2 L1065.0 567.1 L1065.1 575.0 L1065.2 559.3 L1065.4 567.8 L1065.5 582.4 L1065.6 584.4 L1065.7 578.8 L1065.9 569.3 L1066.0 571.5 L1066.1 566.2 L1066.2 582.5 L1066.4 577.2 L1066.5 568.8 L1066.6 574.5 L1066.7 574.5 L1066.9 570.7 L1067.0 575.9 L1067.1 573.4 L1067.3 578.5 L1067.4 582.5 L1067.5 572.4 L1067.6 572.6 L1067.8 569.8 L1067.9 574.3 L1068.0 574.2 L1068.1 583.1 L1068.3 565.5 L1068.4 573.4 L1068.5 567.8 L1068.6 580.8 L1068.8 569.8 L1068.9 574.2 L1069.0 572.7 L1069.2 583.4 L1069.3 558.8 L1069.4 580.9 L1069.5 578.1 L1069.7 577.5 L1069.8 564.7 L1069.9 569.3 L1070.0 567.5 L1070.2 577.1 L1070.3 574.6 L1070.4 580.6 L1070.5 574.7 L1070.7 567.6 L1070.8 574.2 L1070.9 573.8 L1071.1 571.7 L1071.2 577.9 L1071.3 582.3 L1071.4 582.5 L1071.6 568.2 L1071.7 570.2 L1071.8 579.0 L1071.9 588.2 L1072.1 576.9 L1072.2 575.4 L1072.3 567.6 L1072.4 580.8 L1072.6 574.1 L1072.7 585.3 L1072.8 578.9 L1073.0 570.0 L1073.1 579.5 L1073.2 577.0 L1073.3 563.8 L1073.5 576.2 L1073.6 579.6 L1073.7 579.3 L1073.8 572.9 L1074.0 579.1 L1074.1 575.3 L1074.2 570.0 L1074.3 572.5 L1074.5 570.0 L1074.6 571.8 L1074.7 577.3 L1074.9 569.7 L1075.0 564.7 L1075.1 579.4 L1075.2 575.7 L1075.4 560.6 L1075.5 575.8 L1075.6 574.5 L1075.7 577.3 L1075.9 574.1 L1076.0 577.2 L1076.1 558.3 L1076.2 593.2 L1076.4 578.4 L1076.5 580.1 L1076.6 572.6 L1076.8 574.0 L1076.9 569.8 L1077.0 573.5 L1077.1 583.3 L1077.3 569.9 L1077.4 580.4 L1077.5 565.1 L1077.6 584.8 L1077.8 566.0 L1077.9 570.3 L1078.0 569.2 L1078.1 571.9 L1078.3 568.2 L1078.4 568.0 L1078.5 572.7 L1078.7 572.7 L1078.8 575.5 L1078.9 584.4 L1079.0 566.6 L1079.2 586.4 L1079.3 577.5 L1079.4 586.6 L1079.5 576.4 L1079.7 567.7 L1079.8 580.9 L1079.9 576.5 L1080.0 581.9 L1080.2 572.9 L1080.3 576.5 L1080.4 574.9 L1080.6 568.0 L1080.7 565.7 L1080.8 571.7 L1080.9 578.0 L1081.1 571.0 L1081.2 571.6 L1081.3 569.6 L1081.4 579.5 L1081.6 567.1 L1081.7 575.6 L1081.8 566.4 L1081.9 567.3 L1082.1 567.3 L1082.2 567.8 L1082.3 563.9 L1082.5 574.9 L1082.6 572.0 L1082.7 581.0 L1082.8 570.4 L1083.0 572.9 L1083.1 567.4 L1083.2 583.6 L1083.3 578.6 L1083.5 576.6 L1083.6 586.6 L1083.7 573.0 L1083.8 563.8 L1084.0 565.8 L1084.1 565.5 L1084.2 569.7 L1084.4 561.9 L1084.5 573.2 L1084.6 577.9 L1084.7 567.1 L1084.9 565.4 L1085.0 572.0 L1085.1 569.1 L1085.2 574.8 L1085.4 572.7 L1085.5 577.8 L1085.6 565.3 L1085.7 572.5 L1085.9 576.0 L1086.0 564.4 L1086.1 571.5 L1086.3 573.3 L1086.4 577.8 L1086.5 567.5 L1086.6 574.4 L1086.8 571.3 L1086.9 569.9 L1087.0 570.6 L1087.1 567.1 L1087.3 571.6 L1087.4 566.9 L1087.5 573.2 L1087.6 575.4 L1087.8 573.0 L1087.9 566.1 L1088.0 573.5 L1088.2 575.6 L1088.3 578.6 L1088.4 577.1 L1088.5 575.8 L1088.7 586.4 L1088.8 572.1 L1088.9 571.9 L1089.0 567.9 L1089.2 570.4 L1089.3 577.6 L1089.4 574.1 L1089.5 514.7 L1089.7 576.4 L1089.8 563.5 L1089.9 571.0 L1090.0 578.6 L1090.2 579.6 L1090.3 571.6 L1090.4 572.6 L1090.6 569.2 L1090.7 570.1 L1090.8 581.9 L1090.9 570.0 L1091.1 581.7 L1091.2 578.3 L1091.3 582.1 L1091.4 572.9 L1091.6 567.3 L1091.7 577.3 L1091.8 570.8 L1091.9 580.5 L1092.1 561.3 L1092.2 558.0 L1092.3 578.6 L1092.5 579.7 L1092.6 576.1 L1092.7 578.3 L1092.8 570.6 L1093.0 562.0 L1093.1 577.7 L1093.2 572.8 L1093.3 582.3 L1093.5 585.2 L1093.6 573.7 L1093.7 566.7 L1093.8 581.3 L1094.0 566.3 L1094.1 577.5 L1094.2 569.9 L1094.4 582.2 L1094.5 586.2 L1094.6 578.4 L1094.7 586.5 L1094.9 570.5 L1095.0 575.5 L1095.1 557.0 L1095.2 575.2 L1095.4 578.9 L1095.5 576.8 L1095.6 579.6 L1095.7 571.8 L1095.9 572.7 L1096.0 589.1 L1096.1 568.2 L1096.3 574.0 L1096.4 566.5 L1096.5 578.4 L1096.6 573.2 L1096.8 576.5 L1096.9 579.9 L1097.0 562.5 L1097.1 571.1 L1097.3 574.5 L1097.4 576.7 L1097.5 580.1 L1097.6 573.0 L1097.8 577.8 L1097.9 579.4 L1098.0 575.3 L1098.2 576.5 L1098.3 566.8 L1098.4 579.8 L1098.5 584.3 L1098.7 567.5 L1098.8 575.0 L1098.9 580.3 L1099.0 566.8 L1099.2 569.7 L1099.3 586.3 L1099.4 568.7 L1099.5 567.4 L1099.7 564.7 L1099.8 572.2 L1099.9 578.3 L1100.1 575.0 L1100.2 565.7 L1100.3 576.3 L1100.4 567.3 L1100.6 581.0 L1100.7 576.0 L1100.8 570.9 L1100.9 570.9 L1101.1 570.3 L1101.2 585.5 L1101.3 566.6 L1101.4 568.7 L1101.6 568.2 L1101.7 580.8 L1101.8 566.2 L1102.0 576.8 L1102.1 581.1 L1102.2 573.4 L1102.3 582.9 L1102.5 579.5 L1102.6 571.0 L1102.7 574.8 L1102.8 580.9 L1103.0 562.4 L1103.1 576.8 L1103.2 579.8 L1103.3 576.8 L1103.5 575.6 L1103.6 573.6 L1103.7 573.2 L1103.9 572.7 L1104.0 577.6 L1104.1 578.7 L1104.2 570.5 L1104.4 575.5 L1104.5 577.1 L1104.6 570.7 L1104.7 574.4 L1104.9 580.2 L1105.0 577.2 L1105.1 569.9 L1105.2 572.2 L1105.4 575.6 L1105.5 564.2 L1105.6 575.0 L1105.8 575.9 L1105.9 573.1 L1106.0 577.3 L1106.1 580.2 L1106.3 570.6 L1106.4 571.6 L1106.5 574.1 L1106.6 575.2 L1106.8 584.6 L1106.9 570.5 L1107.0 591.3 L1107.1 570.4 L1107.3 578.2 L1107.4 579.9 L1107.5 582.6 L1107.7 573.1 L1107.8 563.8 L1107.9 567.3 L1108.0 579.3 L1108.2 573.6 L1108.3 579.8 L1108.4 571.4 L1108.5 579.5 L1108.7 577.5 L1108.8 566.7 L1108.9 580.2 L1109.0 579.4 L1109.2 569.3 L1109.3 584.2 L1109.4 588.0 L1109.6 576.8 L1109.7 579.9 L1109.8 570.9 L1109.9 569.0 L1110.1 575.4 L1110.2 566.1 L1110.3 565.2 L1110.4 576.8 L1110.6 580.0 L1110.7 571.2 L1110.8 583.8 L1110.9 582.3 L1111.1 572.3 L1111.2 566.9 L1111.3 577.2 L1111.5 569.1 L1111.6 570.4 L1111.7 580.1 L1111.8 559.1 L1112.0 580.7 L1112.1 572.1 L1112.2 573.6 L1112.3 514.7 L1112.5 566.0 L1112.6 569.9 L1112.7 566.8 L1112.8 578.1 L1113.0 577.2 L1113.1 559.8 L1113.2 567.7 L1113.4 571.7 L1113.5 572.0 L1113.6 566.8 L1113.7 585.6 L1113.9 566.8 L1114.0 568.1 L1114.1 571.4 L1114.2 575.4 L1114.4 571.6 L1114.5 569.4 L1114.6 582.5 L1114.7 579.4 L1114.9 568.2 L1115.0 576.8 L1115.1 573.9 L1115.3 575.5 L1115.4 573.2 L1115.5 564.4 L1115.6 567.3 L1115.8 573.6 L1115.9 514.7 L1116.0 561.3 L1116.1 573.2 L1116.3 570.2 L1116.4 572.6 L1116.5 569.7 L1116.6 581.6 L1116.8 585.2 L1116.9 570.4 L1117.0 567.2 L1117.2 578.9 L1117.3 572.5 L1117.4 575.8 L1117.5 584.5 L1117.7 575.9 L1117.8 570.5 L1117.9 580.7 L1118.0 578.4 L1118.2 578.5 L1118.3 575.7 L1118.4 583.1 L1118.5 566.7 L1118.7 575.2 L1118.8 570.6 L1118.9 563.8 L1119.1 577.9 L1119.2 573.6 L1119.3 567.3 L1119.4 576.4 L1119.6 572.5 L1119.7 570.9 L1119.8 575.1 L1119.9 559.8 L1120.1 574.0 L1120.2 576.3 L1120.3 576.4 L1120.4 580.2 L1120.6 584.6 L1120.7 570.6 L1120.8 576.1 L1121.0 569.4 L1121.1 564.3 L1121.2 579.5 L1121.3 569.4 L1121.5 584.0 L1121.6 564.1 L1121.7 577.4 L1121.8 574.8 L1122.0 580.1 L1122.1 579.0 L1122.2 589.3 L1122.3 584.0 L1122.5 579.1 L1122.6 571.4 L1122.7 568.2 L1122.9 585.0 L1123.0 576.6 L1123.1 579.4 L1123.2 575.2 L1123.4 567.2 L1123.5 575.3 L1123.6 565.5 L1123.7 566.2 L1123.9 585.3 L1124.0 562.7 L1124.1 563.8 L1124.2 572.6 L1124.4 579.1 L1124.5 584.0 L1124.6 567.1 L1124.8 572.9 L1124.9 580.1 L1125.0 574.8 L1125.1 567.0 L1125.3 569.9 L1125.4 587.3 L1125.5 560.5 L1125.6 574.0 L1125.8 568.2 L1125.9 576.6 L1126.0 577.6 L1126.1 573.0 L1126.3 572.4 L1126.4 568.1 L1126.5 584.0 L1126.7 570.8 L1126.8 571.1 L1126.9 575.8 L1127.0 576.6 L1127.2 570.7 L1127.3 573.1 L1127.4 573.8 L1127.5 579.5 L1127.7 574.7 L1127.8 578.5 L1127.9 581.1 L1128.0 581.9 L1128.2 577.2 L1128.3 577.7 L1128.4 579.5 L1128.6 573.6 L1128.7 577.3 L1128.8 569.4 L1128.9 571.1 L1129.1 576.9 L1129.2 548.6 L1129.3 567.7 L1129.4 564.7 L1129.6 569.2 L1129.7 567.2 L1129.8 579.7 L1129.9 568.3 L1130.1 577.9 L1130.2 570.8 L1130.3 596.0 L1130.5 581.8 L1130.6 574.4 L1130.7 565.1 L1130.8 577.6 L1131.0 581.2 L1131.1 574.8 L1131.2 578.2 L1131.3 591.7 L1131.5 581.9 L1131.6 574.8 L1131.7 576.5 L1131.8 574.7 L1132.0 570.0 L1132.1 584.0 L1132.2 581.7 L1132.4 581.9 L1132.5 572.2 L1132.6 581.1 L1132.7 579.0 L1132.9 576.8 L1133.0 583.5 L1133.1 578.0 L1133.2 578.6 L1133.4 576.3 L1133.5 575.0 L1133.6 572.8 L1133.7 582.2 L1133.9 570.6 L1134.0 580.5 L1134.1 567.0 L1134.3 580.1 L1134.4 569.8 L1134.5 572.3 L1134.6 567.0 L1134.8 573.7 L1134.9 570.2 L1135.0 583.0 L1135.1 570.7 L1135.3 579.3 L1135.4 575.1 L1135.5 583.8 L1135.6 579.0 L1135.8 573.9 L1135.9 571.4 L1136.0 570.6 L1136.2 579.1 L1136.3 581.6 L1136.4 577.5 L1136.5 580.3 L1136.7 575.1 L1136.8 568.8 L1136.9 566.5 L1137.0 581.2 L1137.2 588.4 L1137.3 587.3 L1137.4 574.5 L1137.5 594.0 L1137.7 575.0 L1137.8 571.9 L1137.9 569.9 L1138.1 573.8 L1138.2 581.4 L1138.3 587.2 L1138.4 579.9 L1138.6 574.1 L1138.7 572.3 L1138.8 565.7 L1138.9 573.7 L1139.1 570.1 L1139.2 576.3 L1139.3 581.5 L1139.4 574.9 L1139.6 586.8 L1139.7 574.2 L1139.8 568.2 L1139.9 580.3 L1140.1 588.6 L1140.2 572.2 L1140.3 579.8 L1140.5 572.7 L1140.6 584.1 L1140.7 573.4 L1140.8 573.6 L1141.0 563.9 L1141.1 576.3 L1141.2 573.0 L1141.3 579.0 L1141.5 587.5 L1141.6 559.1 L1141.7 584.6 L1141.8 557.9 L1142.0 569.5 L1142.1 563.5 L1142.2 582.7 L1142.4 565.0 L1142.5 574.2 L1142.6 570.1 L1142.7 561.4 L1142.9 575.0 L1143.0 572.5 L1143.1 583.2 L1143.2 579.9 L1143.4 581.2 L1143.5 576.0 L1143.6 565.2 L1143.7 570.3 L1143.9 566.1 L1144.0 574.2 L1144.1 568.8 L1144.3 570.5 L1144.4 578.9 L1144.5 577.1 L1144.6 574.5 L1144.8 579.7 L1144.9 570.3 L1145.0 579.5 L1145.1 577.4 L1145.3 581.2 L1145.4 575.9 L1145.5 572.1 L1145.6 576.3 L1145.8 576.0 L1145.9 581.2 L1146.0 573.4 L1146.2 576.0 L1146.3 569.9 L1146.4 588.0 L1146.5 573.6 L1146.7 573.1 L1146.8 580.0 L1146.9 582.3 L1147.0 579.8 L1147.2 576.2 L1147.3 583.6 L1147.4 571.3 L1147.5 573.3 L1147.7 573.4 L1147.8 579.6 L1147.9 576.6 L1148.1 575.6 L1148.2 579.3 L1148.3 577.3 L1148.4 573.6 L1148.6 574.4 L1148.7 574.1 L1148.8 566.8 L1148.9 574.6 L1149.1 576.3 L1149.2 580.5 L1149.3 574.9 L1149.4 582.6 L1149.6 581.0 L1149.7 570.4 L1149.8 572.2 L1150.0 568.1 L1150.1 581.7 L1150.2 570.6 L1150.3 567.6 L1150.5 577.1 L1150.6 571.8 L1150.7 581.3 L1150.8 570.2 L1151.0 582.1 L1151.1 585.9 L1151.2 577.6 L1151.3 555.5 L1151.5 581.0 L1151.6 567.7 L1151.7 580.3 L1151.9 570.3 L1152.0 578.8 L1152.1 584.5 L1152.2 573.4 L1152.4 574.1 L1152.5 577.9 L1152.6 570.0 L1152.7 589.4 L1152.9 569.4 L1153.0 576.1 L1153.1 570.2 L1153.2 580.0 L1153.4 572.2 L1153.5 581.4 L1153.6 570.5 L1153.8 566.4 L1153.9 567.5 L1154.0 582.0 L1154.1 582.7 L1154.3 578.4 L1154.4 573.2 L1154.5 575.3 L1154.6 587.9 L1154.8 566.5 L1154.9 581.2 L1155.0 570.8 L1155.1 570.8 L1155.3 575.3 L1155.4 576.4 L1155.5 576.0 L1155.7 568.4 L1155.8 574.2 L1155.9 576.1 L1156.0 576.0 L1156.2 565.5 L1156.3 569.1 L1156.4 574.5 L1156.5 575.3 L1156.7 581.9 L1156.8 574.9 L1156.9 579.5 L1157.0 575.5 L1157.2 578.4 L1157.3 582.6 L1157.4 583.0 L1157.6 569.8 L1157.7 572.6 L1157.8 581.2 L1157.9 562.9 L1158.1 568.6 L1158.2 571.8 L1158.3 571.8 L1158.4 574.7 L1158.6 572.2 L1158.7 575.4 L1158.8 581.5 L1158.9 576.6 L1159.1 576.8 L1159.2 579.5 L1159.3 587.5 L1159.5 572.3 L1159.6 567.4 L1159.7 562.9 L1159.8 571.3 L1160.0 572.4 L1160.1 573.3 L1160.2 566.7 L1160.3 577.4 L1160.5 567.8 L1160.6 569.5 L1160.7 572.6 L1160.8 571.3 L1161.0 574.6 L1161.1 579.2 L1161.2 581.6 L1161.4 576.1 L1161.5 574.3 L1161.6 574.5 L1161.7 577.6 L1161.9 576.8 L1162.0 581.0 L1162.1 572.6 L1162.2 576.8 L1162.4 575.8 L1162.5 573.1 L1162.6 566.3 L1162.7 578.1 L1162.9 576.7 L1163.0 571.4 L1163.1 569.9 L1163.3 578.5 L1163.4 569.5 L1163.5 569.5 L1163.6 582.5 L1163.8 565.6 L1163.9 564.3 L1164.0 570.5 L1164.1 572.9 L1164.3 576.1 L1164.4 579.1 L1164.5 584.1 L1164.6 574.0 L1164.8 587.7 L1164.9 583.9 L1165.0 572.7 L1165.2 580.7 L1165.3 578.3 L1165.4 569.2 L1165.5 568.6 L1165.7 580.6 L1165.8 575.7 L1165.9 576.4 L1166.0 588.1 L1166.2 581.0 L1166.3 575.0 L1166.4 585.3 L1166.5 575.3 L1166.7 578.5 L1166.8 563.1 L1166.9 580.0 L1167.1 583.2 L1167.2 576.7 L1167.3 576.0 L1167.4 582.6 L1167.6 585.1 L1167.7 580.8 L1167.8 585.6 L1167.9 570.3 L1168.1 569.0 L1168.2 577.8 L1168.3 590.1 L1168.4 570.8 L1168.6 572.5 L1168.7 574.3 L1168.8 569.7 L1169.0 578.7 L1169.1 580.0 L1169.2 566.0 L1169.3 579.2 L1169.5 579.4 L1169.6 588.0 L1169.7 573.7 L1169.8 575.9 L1170.0 583.0 L1170.1 570.3 L1170.2 577.0 L1170.3 588.6 L1170.5 572.5 L1170.6 567.3 L1170.7 571.3 L1170.9 577.1 L1171.0 568.1 L1171.1 572.8 L1171.2 573.9 L1171.4 573.1 L1171.5 581.9 L1171.6 568.9 L1171.7 582.6 L1171.9 584.8 L1172.0 575.7 L1172.1 569.5 L1172.2 572.9 L1172.4 575.9 L1172.5 577.6 L1172.6 576.6 L1172.8 574.5 L1172.9 577.9 L1173.0 571.9 L1173.1 579.3 L1173.3 566.3 L1173.4 578.5 L1173.5 574.1 L1173.6 579.0 L1173.8 579.1 L1173.9 583.0 L1174.0 581.4 L1174.1 569.8 L1174.3 586.8 L1174.4 577.5 L1174.5 562.6 L1174.7 574.8 L1174.8 577.7 L1174.9 574.6 L1175.0 586.4 L1175.2 587.6 L1175.3 573.9 L1175.4 571.2 L1175.5 573.6 L1175.7 572.0 L1175.8 579.0 L1175.9 575.0 L1176.0 564.3 L1176.2 583.7 L1176.3 569.1 L1176.4 580.5 L1176.6 583.8 L1176.7 571.6 L1176.8 581.6 L1176.9 570.0 L1177.1 567.1 L1177.2 571.5 L1177.3 578.9 L1177.4 576.3 L1177.6 571.7 L1177.7 568.3 L1177.8 558.0 L1177.9 586.7 L1178.1 576.1 L1178.2 580.3 L1178.3 581.7 L1178.5 561.6 L1178.6 575.6 L1178.7 565.9 L1178.8 575.6 L1179.0 579.9 L1179.1 570.2 L1179.2 576.9 L1179.3 564.5 L1179.5 575.2 L1179.6 583.1 L1179.7 576.1 L1179.8 564.6 L1180.0 582.7 L1180.1 569.2 L1180.2 573.1 L1180.4 567.8 L1180.5 574.3 L1180.6 576.4 L1180.7 580.9 L1180.9 578.2 L1181.0 576.2 L1181.1 573.0 L1181.2 569.0 L1181.4 575.0 L1181.5 564.4 L1181.6 573.6 L1181.7 580.2 L1181.9 571.5 L1182.0 579.8 L1182.1 569.6 L1182.3 583.5 L1182.4 585.8 L1182.5 574.7 L1182.6 573.5 L1182.8 579.1 L1182.9 569.9 L1183.0 578.2" fill="none" stroke="#0000ff" stroke-width="1.9" stroke-linejoin="round"/>
<clipPath id="c4"><rect x="911.0" y="688.7" width="274.0" height="120.0"/></clipPath>
<path clip-path="url(#c4)" d="M910.9 768.7 L911.0 739.4 L911.1 737.5 L911.2 747.5 L911.3 746.1 L911.4 746.8 L911.4 745.1 L911.5 756.8 L911.6 738.1 L911.7 760.9 L911.8 755.4 L911.9 755.6 L912.0 751.5 L912.1 686.7 L912.2 751.2 L912.3 750.8 L912.4 754.7 L912.4 758.2 L912.5 760.0 L912.6 742.6 L912.7 746.6 L912.8 752.1 L912.9 741.9 L913.0 744.7 L913.1 754.1 L913.2 751.9 L913.3 741.9 L913.4 738.6 L913.4 749.7 L913.5 741.3 L913.6 739.3 L913.7 740.4 L913.8 747.0 L913.9 742.7 L914.0 742.4 L914.1 750.6 L914.2 746.3 L914.3 749.2 L914.4 756.4 L914.5 747.3 L914.5 749.1 L914.6 754.0 L914.7 743.3 L914.8 739.9 L914.9 743.0 L915.0 750.7 L915.1 755.1 L915.2 741.7 L915.3 752.7 L915.4 739.5 L915.5 750.4 L915.5 745.1 L915.6 749.4 L915.7 746.7 L915.8 741.0 L915.9 743.7 L916.0 753.4 L916.1 737.2 L916.2 741.4 L916.3 745.1 L916.4 753.8 L916.5 752.1 L916.5 753.3 L916.6 752.9 L916.7 742.5 L916.8 748.1 L916.9 749.6 L917.0 747.2 L917.1 746.3 L917.2 755.2 L917.3 743.9 L917.4 747.8 L917.5 752.1 L917.5 748.3 L917.6 760.1 L917.7 739.9 L917.8 746.6 L917.9 743.6 L918.0 751.3 L918.1 744.1 L918.2 745.8 L918.3 757.3 L918.4 748.1 L918.5 734.7 L918.5 746.8 L918.6 744.7 L918.7 743.0 L918.8 739.6 L918.9 745.6 L919.0 757.3 L919.1 743.6 L919.2 741.6 L919.3 743.2 L919.4 755.4 L919.5 746.7 L919.5 750.8 L919.6 745.8 L919.7 750.8 L919.8 739.8 L919.9 745.6 L920.0 752.7 L920.1 754.4 L920.2 751.2 L920.3 746.7 L920.4 753.8 L920.5 750.1 L920.5 742.0 L920.6 747.0 L920.7 754.9 L920.8 740.0 L920.9 729.4 L921.0 750.1 L921.1 752.6 L921.2 749.6 L921.3 739.8 L921.4 756.2 L921.5 742.2 L921.6 748.3 L921.6 738.4 L921.7 747.2 L921.8 750.0 L921.9 750.8 L922.0 743.9 L922.1 748.8 L922.2 752.5 L922.3 760.9 L922.4 745.6 L922.5 751.3 L922.6 734.7 L922.6 748.6 L922.7 735.4 L922.8 747.4 L922.9 742.7 L923.0 748.5 L923.1 745.9 L923.2 742.4 L923.3 751.1 L923.4 746.4 L923.5 736.9 L923.6 754.1 L923.6 749.8 L923.7 742.9 L923.8 744.2 L923.9 743.7 L924.0 747.9 L924.1 741.5 L924.2 747.7 L924.3 749.3 L924.4 758.1 L924.5 751.3 L924.6 746.6 L924.6 737.9 L924.7 748.2 L924.8 733.3 L924.9 753.3 L925.0 747.1 L925.1 740.2 L925.2 750.7 L925.3 750.2 L925.4 744.3 L925.5 742.7 L925.6 743.5 L925.6 734.2 L925.7 745.1 L925.8 737.1 L925.9 754.5 L926.0 753.1 L926.1 746.4 L926.2 747.9 L926.3 743.6 L926.4 748.4 L926.5 741.6 L926.6 751.3 L926.6 747.2 L926.7 754.6 L926.8 748.2 L926.9 741.6 L927.0 740.5 L927.1 738.0 L927.2 753.1 L927.3 751.8 L927.4 748.3 L927.5 748.1 L927.6 751.8 L927.6 744.0 L927.7 751.3 L927.8 743.2 L927.9 736.5 L928.0 745.8 L928.1 742.0 L928.2 749.2 L928.3 753.1 L928.4 758.4 L928.5 738.2 L928.6 733.5 L928.7 762.0 L928.7 753.0 L928.8 749.3 L928.9 752.7 L929.0 750.6 L929.1 742.1 L929.2 748.1 L929.3 741.8 L929.4 757.2 L929.5 749.1 L929.6 735.9 L929.7 751.2 L929.7 757.9 L929.8 750.6 L929.9 747.4 L930.0 763.2 L930.1 745.3 L930.2 742.3 L930.3 750.2 L930.4 748.0 L930.5 748.3 L930.6 748.6 L930.7 755.5 L930.7 751.0 L930.8 743.7 L930.9 742.9 L931.0 744.7 L931.1 753.2 L931.2 744.1 L931.3 741.4 L931.4 738.8 L931.5 743.0 L931.6 746.8 L931.7 747.9 L931.7 743.1 L931.8 740.9 L931.9 761.8 L932.0 752.8 L932.1 746.0 L932.2 741.0 L932.3 756.2 L932.4 755.7 L932.5 759.0 L932.6 739.3 L932.7 743.2 L932.7 749.0 L932.8 730.2 L932.9 734.7 L933.0 741.7 L933.1 745.1 L933.2 748.2 L933.3 741.3 L933.4 752.2 L933.5 741.2 L933.6 751.4 L933.7 741.4 L933.7 747.8 L933.8 743.8 L933.9 738.5 L934.0 742.1 L934.1 747.8 L934.2 749.0 L934.3 751.8 L934.4 753.3 L934.5 740.6 L934.6 746.1 L934.7 754.6 L934.7 738.5 L934.8 751.1 L934.9 738.3 L935.0 745.1 L935.1 742.3 L935.2 746.0 L935.3 753.6 L935.4 748.5 L935.5 749.7 L935.6 753.2 L935.7 744.0 L935.8 754.7 L935.8 754.6 L935.9 752.0 L936.0 755.1 L936.1 747.2 L936.2 743.4 L936.3 746.9 L936.4 748.9 L936.5 742.7 L936.6 743.5 L936.7 737.7 L936.8 750.7 L936.8 745.7 L936.9 749.3 L937.0 750.4 L937.1 748.4 L937.2 742.9 L937.3 750.4 L937.4 754.0 L937.5 736.9 L937.6 746.2 L937.7 744.9 L937.8 742.5 L937.8 740.1 L937.9 741.8 L938.0 751.7 L938.1 748.8 L938.2 740.5 L938.3 747.3 L938.4 739.3 L938.5 738.4 L938.6 754.3 L938.7 747.6 L938.8 752.9 L938.8 751.6 L938.9 748.8 L939.0 746.3 L939.1 744.6 L939.2 754.9 L939.3 747.6 L939.4 749.3 L939.5 752.9 L939.6 746.0 L939.7 756.9 L939.8 748.7 L939.8 747.5 L939.9 736.5 L940.0 747.9 L940.1 749.4 L940.2 741.3 L940.3 754.1 L940.4 748.7 L940.5 733.4 L940.6 738.9 L940.7 744.7 L940.8 740.8 L940.8 755.4 L940.9 740.7 L941.0 751.0 L941.1 745.3 L941.2 748.1 L941.3 745.1 L941.4 750.8 L941.5 759.2 L941.6 763.1 L941.7 759.6 L941.8 747.0 L941.9 752.3 L941.9 758.5 L942.0 739.6 L942.1 746.9 L942.2 753.2 L942.3 755.5 L942.4 743.3 L942.5 748.6 L942.6 756.0 L942.7 748.4 L942.8 758.8 L942.9 738.4 L942.9 749.6 L943.0 747.1 L943.1 753.8 L943.2 755.4 L943.3 749.4 L943.4 754.2 L943.5 759.6 L943.6 744.5 L943.7 750.1 L943.8 756.8 L943.9 745.8 L943.9 749.8 L944.0 751.0 L944.1 759.2 L944.2 748.7 L944.3 762.6 L944.4 755.7 L944.5 740.4 L944.6 746.0 L944.7 757.8 L944.8 754.5 L944.9 747.7 L944.9 743.0 L945.0 749.2 L945.1 748.7 L945.2 743.5 L945.3 740.1 L945.4 757.3 L945.5 751.1 L945.6 741.9 L945.7 744.9 L945.8 756.1 L945.9 761.6 L945.9 740.4 L946.0 686.7 L946.1 747.6 L946.2 751.1 L946.3 742.6 L946.4 741.8 L946.5 739.6 L946.6 756.6 L946.7 750.4 L946.8 743.3 L946.9 749.5 L946.9 748.7 L947.0 737.9 L947.1 747.8 L947.2 757.0 L947.3 736.3 L947.4 743.2 L947.5 746.9 L947.6 744.5 L947.7 743.9 L947.8 747.7 L947.9 742.8 L947.9 748.5 L948.0 743.1 L948.1 733.2 L948.2 749.2 L948.3 763.3 L948.4 737.5 L948.5 744.6 L948.6 751.9 L948.7 745.0 L948.8 757.5 L948.9 741.9 L949.0 761.8 L949.0 743.9 L949.1 738.9 L949.2 750.5 L949.3 744.6 L949.4 744.7 L949.5 758.9 L949.6 750.0 L949.7 736.7 L949.8 747.1 L949.9 732.9 L950.0 747.0 L950.0 749.9 L950.1 748.9 L950.2 751.7 L950.3 761.7 L950.4 748.3 L950.5 738.7 L950.6 753.2 L950.7 753.5 L950.8 751.3 L950.9 740.1 L951.0 739.8 L951.0 751.0 L951.1 742.9 L951.2 739.7 L951.3 747.1 L951.4 749.7 L951.5 742.3 L951.6 752.7 L951.7 746.0 L951.8 742.6 L951.9 736.0 L952.0 740.9 L952.0 744.2 L952.1 753.2 L952.2 742.5 L952.3 747.5 L952.4 734.8 L952.5 746.8 L952.6 746.8 L952.7 751.2 L952.8 748.2 L952.9 744.7 L953.0 754.6 L953.0 749.9 L953.1 755.5 L953.2 756.3 L953.3 743.6 L953.4 751.9 L953.5 750.3 L953.6 745.3 L953.7 752.6 L953.8 750.3 L953.9 748.9 L954.0 752.3 L954.0 753.1 L954.1 739.8 L954.2 744.3 L954.3 743.2 L954.4 756.0 L954.5 750.5 L954.6 742.2 L954.7 742.4 L954.8 753.4 L954.9 745.1 L955.0 738.1 L955.0 742.9 L955.1 748.6 L955.2 751.7 L955.3 758.9 L955.4 749.8 L955.5 747.1 L955.6 748.0 L955.7 749.0 L955.8 742.9 L955.9 740.2 L956.0 754.5 L956.1 747.1 L956.1 748.1 L956.2 747.2 L956.3 750.7 L956.4 744.2 L956.5 740.4 L956.6 750.9 L956.7 750.2 L956.8 740.3 L956.9 755.1 L957.0 743.5 L957.1 747.8 L957.1 753.2 L957.2 745.9 L957.3 749.4 L957.4 745.3 L957.5 744.3 L957.6 749.0 L957.7 745.9 L957.8 746.7 L957.9 743.7 L958.0 759.7 L958.1 748.9 L958.1 743.3 L958.2 748.4 L958.3 740.3 L958.4 750.9 L958.5 750.4 L958.6 747.7 L958.7 757.6 L958.8 733.2 L958.9 753.7 L959.0 747.5 L959.1 762.5 L959.1 745.9 L959.2 753.4 L959.3 742.6 L959.4 746.4 L959.5 738.1 L959.6 750.3 L959.7 746.1 L959.8 749.1 L959.9 745.9 L960.0 752.2 L960.1 749.0 L960.1 740.4 L960.2 741.9 L960.3 755.9 L960.4 746.4 L960.5 747.1 L960.6 755.4 L960.7 743.6 L960.8 753.2 L960.9 745.0 L961.0 740.9 L961.1 751.7 L961.1 743.3 L961.2 741.8 L961.3 751.3 L961.4 743.8 L961.5 737.0 L961.6 739.8 L961.7 752.6 L961.8 763.6 L961.9 749.9 L962.0 754.2 L962.1 739.2 L962.1 751.3 L962.2 736.8 L962.3 756.0 L962.4 751.5 L962.5 746.6 L962.6 754.6 L962.7 735.9 L962.8 752.7 L962.9 743.9 L963.0 745.0 L963.1 736.1 L963.2 734.0 L963.2 746.9 L963.3 744.7 L963.4 743.2 L963.5 748.2 L963.6 740.3 L963.7 756.5 L963.8 752.4 L963.9 756.7 L964.0 746.0 L964.1 738.4 L964.2 744.8 L964.2 749.3 L964.3 748.4 L964.4 738.5 L964.5 748.8 L964.6 751.5 L964.7 746.5 L964.8 759.6 L964.9 748.7 L965.0 748.0 L965.1 749.7 L965.2 752.8 L965.2 733.6 L965.3 740.0 L965.4 741.3 L965.5 740.4 L965.6 754.3 L965.7 748.3 L965.8 748.4 L965.9 748.1 L966.0 742.4 L966.1 747.7 L966.2 737.5 L966.2 747.6 L966.3 746.0 L966.4 740.7 L966.5 744.9 L966.6 754.6 L966.7 743.6 L966.8 751.8 L966.9 736.4 L967.0 734.5 L967.1 753.0 L967.2 741.2 L967.2 749.3 L967.3 759.6 L967.4 742.8 L967.5 740.2 L967.6 735.0 L967.7 744.8 L967.8 752.2 L967.9 739.1 L968.0 746.9 L968.1 745.7 L968.2 743.1 L968.2 752.0 L968.3 742.6 L968.4 747.4 L968.5 757.1 L968.6 743.3 L968.7 757.7 L968.8 751.9 L968.9 743.5 L969.0 752.8 L969.1 741.6 L969.2 755.4 L969.3 746.2 L969.3 741.8 L969.4 750.1 L969.5 751.0 L969.6 748.7 L969.7 754.8 L969.8 750.7 L969.9 750.2 L970.0 753.4 L970.1 743.1 L970.2 742.5 L970.3 774.4 L970.3 742.9 L970.4 738.0 L970.5 751.6 L970.6 732.5 L970.7 752.6 L970.8 747.8 L970.9 741.6 L971.0 753.7 L971.1 746.9 L971.2 749.4 L971.3 745.7 L971.3 735.6 L971.4 753.0 L971.5 752.6 L971.6 750.2 L971.7 753.7 L971.8 751.7 L971.9 754.7 L972.0 739.8 L972.1 747.3 L972.2 740.9 L972.3 742.2 L972.3 756.2 L972.4 745.3 L972.5 741.5 L972.6 750.9 L972.7 747.5 L972.8 747.6 L972.9 756.1 L973.0 750.9 L973.1 742.7 L973.2 745.4 L973.3 743.1 L973.3 754.4 L973.4 750.6 L973.5 740.7 L973.6 756.9 L973.7 748.1 L973.8 755.6 L973.9 746.4 L974.0 740.1 L974.1 738.1 L974.2 754.0 L974.3 747.5 L974.3 760.6 L974.4 744.5 L974.5 751.3 L974.6 732.5 L974.7 756.6 L974.8 754.2 L974.9 751.7 L975.0 741.2 L975.1 757.3 L975.2 741.2 L975.3 751.4 L975.3 742.3 L975.4 752.2 L975.5 754.2 L975.6 744.5 L975.7 748.3 L975.8 748.0 L975.9 745.4 L976.0 734.6 L976.1 733.8 L976.2 744.2 L976.3 740.5 L976.4 750.3 L976.4 736.4 L976.5 756.2 L976.6 755.4 L976.7 739.6 L976.8 745.3 L976.9 740.8 L977.0 744.5 L977.1 742.1 L977.2 737.9 L977.3 748.4 L977.4 748.4 L977.4 744.5 L977.5 737.8 L977.6 759.0 L977.7 745.0 L977.8 747.2 L977.9 745.6 L978.0 752.4 L978.1 744.5 L978.2 739.9 L978.3 752.2 L978.4 733.0 L978.4 743.5 L978.5 742.0 L978.6 741.9 L978.7 738.1 L978.8 754.6 L978.9 746.7 L979.0 740.1 L979.1 752.2 L979.2 760.0 L979.3 748.0 L979.4 758.9 L979.4 754.4 L979.5 753.5 L979.6 755.3 L979.7 750.2 L979.8 747.6 L979.9 758.6 L980.0 753.8 L980.1 746.7 L980.2 763.4 L980.3 747.5 L980.4 734.2 L980.4 746.5 L980.5 746.1 L980.6 742.8 L980.7 746.0 L980.8 745.3 L980.9 735.8 L981.0 760.3 L981.1 747.8 L981.2 749.5 L981.3 744.2 L981.4 748.1 L981.4 742.9 L981.5 745.3 L981.6 762.3 L981.7 755.0 L981.8 749.4 L981.9 756.3 L982.0 751.0 L982.1 741.1 L982.2 757.6 L982.3 754.3 L982.4 744.5 L982.4 750.9 L982.5 746.2 L982.6 736.3 L982.7 741.6 L982.8 750.8 L982.9 745.6 L983.0 745.7 L983.1 746.7 L983.2 754.7 L983.3 743.5 L983.4 737.6 L983.5 752.5 L983.5 754.2 L983.6 742.1 L983.7 743.2 L983.8 746.6 L983.9 755.1 L984.0 743.8 L984.1 753.4 L984.2 760.2 L984.3 751.2 L984.4 742.0 L984.5 743.7 L984.5 743.0 L984.6 742.6 L984.7 735.8 L984.8 755.3 L984.9 755.0 L985.0 740.3 L985.1 744.1 L985.2 749.7 L985.3 750.8 L985.4 748.9 L985.5 747.5 L985.5 752.4 L985.6 754.1 L985.7 748.2 L985.8 748.5 L985.9 753.0 L986.0 748.8 L986.1 744.7 L986.2 727.9 L986.3 757.1 L986.4 748.6 L986.5 760.7 L986.5 746.5 L986.6 743.2 L986.7 740.6 L986.8 748.3 L986.9 750.9 L987.0 742.4 L987.1 741.1 L987.2 759.9 L987.3 750.1 L987.4 750.0 L987.5 750.8 L987.5 752.9 L987.6 736.2 L987.7 744.1 L987.8 742.3 L987.9 750.9 L988.0 739.1 L988.1 747.9 L988.2 750.7 L988.3 758.9 L988.4 741.9 L988.5 754.2 L988.5 757.8 L988.6 742.3 L988.7 753.4 L988.8 748.0 L988.9 741.5 L989.0 760.9 L989.1 749.5 L989.2 749.2 L989.3 735.8 L989.4 747.3 L989.5 742.3 L989.5 740.9 L989.6 744.9 L989.7 744.6 L989.8 753.4 L989.9 749.1 L990.0 749.0 L990.1 750.1 L990.2 739.8 L990.3 741.8 L990.4 746.6 L990.5 745.9 L990.6 749.8 L990.6 745.0 L990.7 756.1 L990.8 746.6 L990.9 743.0 L991.0 751.1 L991.1 754.4 L991.2 753.7 L991.3 737.3 L991.4 761.4 L991.5 751.3 L991.6 751.0 L991.6 741.2 L991.7 744.3 L991.8 751.9 L991.9 746.0 L992.0 758.3 L992.1 751.9 L992.2 754.4 L992.3 744.3 L992.4 750.0 L992.5 734.4 L992.6 750.4 L992.6 747.3 L992.7 746.7 L992.8 733.3 L992.9 747.1 L993.0 758.3 L993.1 760.6 L993.2 744.0 L993.3 742.4 L993.4 750.2 L993.5 744.7 L993.6 741.3 L993.6 735.5 L993.7 753.7 L993.8 747.5 L993.9 755.6 L994.0 741.6 L994.1 749.0 L994.2 753.3 L994.3 742.5 L994.4 743.6 L994.5 748.3 L994.6 743.2 L994.6 761.0 L994.7 755.4 L994.8 748.9 L994.9 748.1 L995.0 737.3 L995.1 735.4 L995.2 740.8 L995.3 748.0 L995.4 752.0 L995.5 745.6 L995.6 753.1 L995.6 759.9 L995.7 755.8 L995.8 752.3 L995.9 734.2 L996.0 746.2 L996.1 748.8 L996.2 747.7 L996.3 752.5 L996.4 737.9 L996.5 743.8 L996.6 735.8 L996.7 754.1 L996.7 753.2 L996.8 736.0 L996.9 756.1 L997.0 748.5 L997.1 743.8 L997.2 750.7 L997.3 757.2 L997.4 748.1 L997.5 740.5 L997.6 744.7 L997.7 750.2 L997.7 734.5 L997.8 738.1 L997.9 742.6 L998.0 746.8 L998.1 740.0 L998.2 746.1 L998.3 748.6 L998.4 751.4 L998.5 741.7 L998.6 741.5 L998.7 745.2 L998.7 738.8 L998.8 751.7 L998.9 744.8 L999.0 745.0 L999.1 751.7 L999.2 748.8 L999.3 747.7 L999.4 744.2 L999.5 750.1 L999.6 758.0 L999.7 764.3 L999.7 745.3 L999.8 737.2 L999.9 733.8 L1000.0 740.7 L1000.1 752.5 L1000.2 755.7 L1000.3 740.9 L1000.4 745.4 L1000.5 751.2 L1000.6 749.9 L1000.7 746.8 L1000.7 755.5 L1000.8 744.0 L1000.9 734.4 L1001.0 750.1 L1001.1 751.0 L1001.2 752.7 L1001.3 739.2 L1001.4 751.5 L1001.5 752.4 L1001.6 748.2 L1001.7 749.1 L1001.7 746.7 L1001.8 744.2 L1001.9 751.1 L1002.0 756.6 L1002.1 749.6 L1002.2 755.9 L1002.3 751.0 L1002.4 740.4 L1002.5 750.3 L1002.6 745.4 L1002.7 745.8 L1002.7 750.3 L1002.8 749.2 L1002.9 736.5 L1003.0 745.1 L1003.1 749.3 L1003.2 746.5 L1003.3 751.9 L1003.4 744.5 L1003.5 748.6 L1003.6 741.8 L1003.7 747.4 L1003.8 747.5 L1003.8 734.8 L1003.9 749.0 L1004.0 743.7 L1004.1 752.1 L1004.2 732.7 L1004.3 754.2 L1004.4 749.5 L1004.5 750.0 L1004.6 748.3 L1004.7 756.5 L1004.8 751.2 L1004.8 742.9 L1004.9 747.0 L1005.0 740.2 L1005.1 750.4 L1005.2 747.8 L1005.3 738.2 L1005.4 748.7 L1005.5 745.8 L1005.6 741.3 L1005.7 748.8 L1005.8 753.1 L1005.8 745.7 L1005.9 744.8 L1006.0 752.8 L1006.1 750.7 L1006.2 740.9 L1006.3 733.3 L1006.4 749.3 L1006.5 732.9 L1006.6 742.1 L1006.7 750.0 L1006.8 749.2 L1006.8 751.6 L1006.9 738.5 L1007.0 736.7 L1007.1 751.6 L1007.2 751.2 L1007.3 740.8 L1007.4 745.9 L1007.5 755.7 L1007.6 749.3 L1007.7 747.6 L1007.8 745.4 L1007.8 744.0 L1007.9 745.4 L1008.0 737.2 L1008.1 754.1 L1008.2 749.3 L1008.3 750.7 L1008.4 748.4 L1008.5 742.6 L1008.6 739.3 L1008.7 742.9 L1008.8 747.8 L1008.8 751.4 L1008.9 747.9 L1009.0 730.2 L1009.1 740.3 L1009.2 744.9 L1009.3 758.7 L1009.4 748.5 L1009.5 749.1 L1009.6 758.8 L1009.7 732.2 L1009.8 757.2 L1009.8 745.7 L1009.9 737.1 L1010.0 749.7 L1010.1 741.1 L1010.2 734.0 L1010.3 747.4 L1010.4 751.9 L1010.5 741.5 L1010.6 745.6 L1010.7 751.5 L1010.8 744.9 L1010.9 752.3 L1010.9 742.1 L1011.0 744.0 L1011.1 733.8 L1011.2 757.2 L1011.3 759.5 L1011.4 750.1 L1011.5 749.9 L1011.6 742.1 L1011.7 744.8 L1011.8 759.5 L1011.9 751.2 L1011.9 741.1 L1012.0 760.5 L1012.1 746.5 L1012.2 754.9 L1012.3 749.4 L1012.4 744.2 L1012.5 735.8 L1012.6 746.4 L1012.7 750.9 L1012.8 750.4 L1012.9 746.1 L1012.9 746.1 L1013.0 751.8 L1013.1 745.8 L1013.2 745.6 L1013.3 749.0 L1013.4 754.3 L1013.5 746.5 L1013.6 749.2 L1013.7 750.8 L1013.8 751.2 L1013.9 749.7 L1013.9 750.8 L1014.0 744.3 L1014.1 743.6 L1014.2 754.1 L1014.3 739.7 L1014.4 746.3 L1014.5 745.3 L1014.6 749.6 L1014.7 741.8 L1014.8 755.2 L1014.9 747.2 L1014.9 757.7 L1015.0 740.5 L1015.1 745.8 L1015.2 742.0 L1015.3 755.7 L1015.4 746.7 L1015.5 756.1 L1015.6 756.1 L1015.7 738.7 L1015.8 738.7 L1015.9 737.5 L1015.9 743.5 L1016.0 753.6 L1016.1 755.7 L1016.2 752.7 L1016.3 743.3 L1016.4 746.6 L1016.5 745.3 L1016.6 752.1 L1016.7 756.4 L1016.8 741.0 L1016.9 747.9 L1016.9 749.1 L1017.0 750.8 L1017.1 744.3 L1017.2 753.2 L1017.3 744.9 L1017.4 754.5 L1017.5 738.6 L1017.6 756.1 L1017.7 745.7 L1017.8 745.6 L1017.9 741.7 L1018.0 755.7 L1018.0 745.2 L1018.1 757.2 L1018.2 742.0 L1018.3 750.2 L1018.4 743.5 L1018.5 749.5 L1018.6 740.1 L1018.7 740.8 L1018.8 755.7 L1018.9 743.7 L1019.0 730.7 L1019.0 739.9 L1019.1 753.0 L1019.2 760.1 L1019.3 748.4 L1019.4 751.1 L1019.5 755.0 L1019.6 739.4 L1019.7 744.9 L1019.8 743.3 L1019.9 752.7 L1020.0 741.2 L1020.0 749.3 L1020.1 757.4 L1020.2 741.7 L1020.3 751.0 L1020.4 745.3 L1020.5 749.1 L1020.6 749.0 L1020.7 740.0 L1020.8 741.4 L1020.9 750.3 L1021.0 747.8 L1021.0 748.1 L1021.1 746.4 L1021.2 739.3 L1021.3 757.1 L1021.4 741.8 L1021.5 744.1 L1021.6 746.9 L1021.7 737.6 L1021.8 755.3 L1021.9 747.7 L1022.0 741.6 L1022.0 753.5 L1022.1 756.5 L1022.2 751.7 L1022.3 745.9 L1022.4 736.4 L1022.5 739.0 L1022.6 751.0 L1022.7 742.2 L1022.8 750.0 L1022.9 750.5 L1023.0 739.3 L1023.0 739.7 L1023.1 744.2 L1023.2 740.1 L1023.3 741.8 L1023.4 745.9 L1023.5 747.5 L1023.6 747.7 L1023.7 746.0 L1023.8 750.4 L1023.9 742.1 L1024.0 743.4 L1024.1 746.9 L1024.1 752.5 L1024.2 752.2 L1024.3 749.4 L1024.4 752.7 L1024.5 749.2 L1024.6 756.1 L1024.7 746.3 L1024.8 752.5 L1024.9 749.6 L1025.0 746.9 L1025.1 750.3 L1025.1 740.1 L1025.2 740.1 L1025.3 760.2 L1025.4 747.5 L1025.5 752.3 L1025.6 755.9 L1025.7 740.8 L1025.8 735.1 L1025.9 756.4 L1026.0 751.1 L1026.1 742.8 L1026.1 747.3 L1026.2 754.7 L1026.3 743.3 L1026.4 778.4 L1026.5 743.3 L1026.6 741.8 L1026.7 756.9 L1026.8 750.2 L1026.9 759.5 L1027.0 734.9 L1027.1 743.1 L1027.1 741.9 L1027.2 745.9 L1027.3 743.3 L1027.4 737.9 L1027.5 758.2 L1027.6 739.1 L1027.7 749.4 L1027.8 745.3 L1027.9 746.6 L1028.0 746.1 L1028.1 731.0 L1028.1 754.8 L1028.2 733.4 L1028.3 748.5 L1028.4 745.8 L1028.5 744.8 L1028.6 757.3 L1028.7 754.2 L1028.8 751.1 L1028.9 748.3 L1029.0 750.9 L1029.1 750.7 L1029.1 741.6 L1029.2 740.6 L1029.3 740.7 L1029.4 750.6 L1029.5 748.3 L1029.6 745.2 L1029.7 749.1 L1029.8 750.1 L1029.9 744.0 L1030.0 746.7 L1030.1 751.2 L1030.1 736.1 L1030.2 742.2 L1030.3 754.2 L1030.4 739.0 L1030.5 750.0 L1030.6 759.9 L1030.7 753.8 L1030.8 737.5 L1030.9 759.0 L1031.0 748.6 L1031.1 747.6 L1031.2 744.0 L1031.2 756.4 L1031.3 758.1 L1031.4 750.0 L1031.5 739.3 L1031.6 749.4 L1031.7 748.3 L1031.8 755.5 L1031.9 754.8 L1032.0 747.4 L1032.1 746.1 L1032.2 750.7 L1032.2 741.4 L1032.3 750.3 L1032.4 749.5 L1032.5 734.0 L1032.6 742.9 L1032.7 753.6 L1032.8 749.3 L1032.9 746.5 L1033.0 749.8 L1033.1 752.1 L1033.2 758.4 L1033.2 752.3 L1033.3 743.0 L1033.4 743.7 L1033.5 748.8 L1033.6 752.1 L1033.7 752.8 L1033.8 756.3 L1033.9 747.1 L1034.0 755.6 L1034.1 751.7 L1034.2 747.1 L1034.2 736.1 L1034.3 751.7 L1034.4 745.4 L1034.5 741.3 L1034.6 737.9 L1034.7 735.4 L1034.8 753.3 L1034.9 743.0 L1035.0 763.2 L1035.1 739.1 L1035.2 748.4 L1035.2 747.4 L1035.3 749.7 L1035.4 744.0 L1035.5 746.5 L1035.6 758.3 L1035.7 758.3 L1035.8 761.3 L1035.9 744.7 L1036.0 743.8 L1036.1 737.6 L1036.2 749.3 L1036.2 749.7 L1036.3 750.8 L1036.4 737.5 L1036.5 757.0 L1036.6 748.9 L1036.7 759.2 L1036.8 747.3 L1036.9 754.2 L1037.0 751.6 L1037.1 740.7 L1037.2 758.1 L1037.2 759.4 L1037.3 763.4 L1037.4 755.6 L1037.5 757.1 L1037.6 758.8 L1037.7 749.3 L1037.8 751.3 L1037.9 741.8 L1038.0 753.1 L1038.1 760.0 L1038.2 739.2 L1038.3 757.8 L1038.3 755.8 L1038.4 758.6 L1038.5 743.3 L1038.6 747.2 L1038.7 748.3 L1038.8 741.4 L1038.9 759.1 L1039.0 745.1 L1039.1 740.2 L1039.2 753.2 L1039.3 741.1 L1039.3 744.6 L1039.4 751.8 L1039.5 759.2 L1039.6 739.0 L1039.7 736.8 L1039.8 743.3 L1039.9 758.0 L1040.0 759.5 L1040.1 764.2 L1040.2 747.7 L1040.3 754.0 L1040.3 739.2 L1040.4 747.9 L1040.5 738.8 L1040.6 748.5 L1040.7 745.4 L1040.8 757.0 L1040.9 743.8 L1041.0 746.6 L1041.1 745.4 L1041.2 748.5 L1041.3 754.6 L1041.3 743.9 L1041.4 744.2 L1041.5 750.6 L1041.6 753.5 L1041.7 736.2 L1041.8 756.8 L1041.9 742.6 L1042.0 740.6 L1042.1 739.1 L1042.2 763.3 L1042.3 745.9 L1042.3 752.7 L1042.4 744.2 L1042.5 748.6 L1042.6 743.0 L1042.7 749.7 L1042.8 749.9 L1042.9 750.2 L1043.0 740.1 L1043.1 744.3 L1043.2 750.7 L1043.3 738.9 L1043.3 734.8 L1043.4 748.5 L1043.5 753.2 L1043.6 742.1 L1043.7 744.3 L1043.8 746.1 L1043.9 744.7 L1044.0 750.1 L1044.1 741.4 L1044.2 749.2 L1044.3 764.1 L1044.3 747.5 L1044.4 742.3 L1044.5 746.1 L1044.6 743.1 L1044.7 748.7 L1044.8 755.3 L1044.9 743.8 L1045.0 741.1 L1045.1 752.9 L1045.2 742.4 L1045.3 746.8 L1045.4 759.5 L1045.4 743.8 L1045.5 754.0 L1045.6 747.3 L1045.7 766.0 L1045.8 739.6 L1045.9 749.6 L1046.0 745.0 L1046.1 750.0 L1046.2 754.5 L1046.3 746.7 L1046.4 755.3 L1046.4 744.9 L1046.5 741.7 L1046.6 749.4 L1046.7 757.2 L1046.8 740.2 L1046.9 755.2 L1047.0 747.9 L1047.1 747.0 L1047.2 747.1 L1047.3 758.0 L1047.4 742.9 L1047.4 753.0 L1047.5 747.8 L1047.6 739.3 L1047.7 741.0 L1047.8 749.7 L1047.9 749.3 L1048.0 739.1 L1048.1 747.0 L1048.2 757.5 L1048.3 750.9 L1048.4 748.4 L1048.4 748.1 L1048.5 748.8 L1048.6 752.6 L1048.7 749.6 L1048.8 756.3 L1048.9 745.3 L1049.0 752.0 L1049.1 753.3 L1049.2 744.4 L1049.3 752.8 L1049.4 745.6 L1049.4 742.9 L1049.5 745.2 L1049.6 751.2 L1049.7 744.8 L1049.8 752.6 L1049.9 749.5 L1050.0 749.9 L1050.1 750.5 L1050.2 754.6 L1050.3 751.0 L1050.4 736.9 L1050.4 751.0 L1050.5 741.3 L1050.6 752.6 L1050.7 748.7 L1050.8 747.6 L1050.9 754.1 L1051.0 746.9 L1051.1 740.8 L1051.2 744.2 L1051.3 754.4 L1051.4 746.5 L1051.5 744.4 L1051.5 747.1 L1051.6 752.6 L1051.7 748.1 L1051.8 750.6 L1051.9 741.1 L1052.0 736.4 L1052.1 754.9 L1052.2 744.4 L1052.3 742.3 L1052.4 755.1 L1052.5 753.0 L1052.5 751.1 L1052.6 750.1 L1052.7 750.3 L1052.8 753.8 L1052.9 761.2 L1053.0 743.7 L1053.1 748.7 L1053.2 734.4 L1053.3 750.8 L1053.4 756.2 L1053.5 750.4 L1053.5 742.6 L1053.6 750.1 L1053.7 754.9 L1053.8 743.9 L1053.9 745.5 L1054.0 747.5 L1054.1 748.4 L1054.2 750.2 L1054.3 746.8 L1054.4 749.2 L1054.5 752.1 L1054.5 751.6 L1054.6 751.3 L1054.7 746.3 L1054.8 748.6 L1054.9 737.0 L1055.0 748.7 L1055.1 744.4 L1055.2 747.0 L1055.3 760.7 L1055.4 745.2 L1055.5 747.2 L1055.5 746.8 L1055.6 745.8 L1055.7 750.7 L1055.8 746.1 L1055.9 735.9 L1056.0 758.4 L1056.1 754.0 L1056.2 746.5 L1056.3 748.3 L1056.4 755.0 L1056.5 755.2 L1056.5 757.3 L1056.6 751.8 L1056.7 749.5 L1056.8 754.6 L1056.9 740.5 L1057.0 754.5 L1057.1 747.2 L1057.2 738.6 L1057.3 739.8 L1057.4 753.0 L1057.5 744.9 L1057.5 749.0 L1057.6 746.3 L1057.7 741.1 L1057.8 750.7 L1057.9 749.5 L1058.0 738.3 L1058.1 741.5 L1058.2 751.2 L1058.3 746.2 L1058.4 745.8 L1058.5 747.3 L1058.6 752.5 L1058.6 759.9 L1058.7 747.4 L1058.8 754.3 L1058.9 746.4 L1059.0 737.6 L1059.1 738.6 L1059.2 733.5 L1059.3 753.4 L1059.4 748.4 L1059.5 763.4 L1059.6 742.5 L1059.6 739.2 L1059.7 740.3 L1059.8 743.9 L1059.9 743.1 L1060.0 746.9 L1060.1 737.3 L1060.2 750.6 L1060.3 750.9 L1060.4 758.9 L1060.5 748.8 L1060.6 740.6 L1060.6 744.8 L1060.7 753.8 L1060.8 738.3 L1060.9 739.6 L1061.0 756.5 L1061.1 757.5 L1061.2 738.2 L1061.3 746.7 L1061.4 755.1 L1061.5 744.9 L1061.6 748.4 L1061.6 752.7 L1061.7 737.9 L1061.8 755.7 L1061.9 760.8 L1062.0 740.5 L1062.1 753.8 L1062.2 753.2 L1062.3 744.1 L1062.4 742.3 L1062.5 748.8 L1062.6 747.1 L1062.6 746.0 L1062.7 736.5 L1062.8 740.6 L1062.9 749.4 L1063.0 741.2 L1063.1 742.5 L1063.2 748.6 L1063.3 742.7 L1063.4 751.2 L1063.5 737.9 L1063.6 760.0 L1063.6 760.7 L1063.7 749.8 L1063.8 749.3 L1063.9 742.4 L1064.0 746.0 L1064.1 757.7 L1064.2 740.4 L1064.3 750.0 L1064.4 745.3 L1064.5 748.1 L1064.6 742.7 L1064.6 748.3 L1064.7 753.0 L1064.8 760.5 L1064.9 741.2 L1065.0 753.3 L1065.1 746.5 L1065.2 753.9 L1065.3 749.4 L1065.4 750.4 L1065.5 739.8 L1065.6 738.0 L1065.7 758.8 L1065.7 750.2 L1065.8 743.4 L1065.9 745.4 L1066.0 748.1 L1066.1 754.8 L1066.2 740.7 L1066.3 739.2 L1066.4 751.8 L1066.5 748.4 L1066.6 747.0 L1066.7 737.8 L1066.7 741.0 L1066.8 747.4 L1066.9 745.5 L1067.0 737.8 L1067.1 750.8 L1067.2 756.0 L1067.3 757.7 L1067.4 741.6 L1067.5 749.7 L1067.6 735.0 L1067.7 732.2 L1067.7 755.1 L1067.8 751.6 L1067.9 748.0 L1068.0 747.8 L1068.1 748.5 L1068.2 747.2 L1068.3 752.4 L1068.4 745.7 L1068.5 748.4 L1068.6 740.7 L1068.7 749.8 L1068.7 750.5 L1068.8 739.2 L1068.9 734.1 L1069.0 747.7 L1069.1 754.1 L1069.2 744.1 L1069.3 740.8 L1069.4 741.2 L1069.5 746.1 L1069.6 744.5 L1069.7 749.3 L1069.7 746.6 L1069.8 752.3 L1069.9 740.9 L1070.0 744.6 L1070.1 752.2 L1070.2 749.5 L1070.3 752.0 L1070.4 749.8 L1070.5 742.1 L1070.6 749.4 L1070.7 745.9 L1070.7 760.4 L1070.8 750.1 L1070.9 754.7 L1071.0 742.6 L1071.1 754.9 L1071.2 749.6 L1071.3 745.8 L1071.4 746.6 L1071.5 750.5 L1071.6 734.3 L1071.7 738.7 L1071.8 745.3 L1071.8 746.7 L1071.9 746.6 L1072.0 741.2 L1072.1 739.2 L1072.2 740.0 L1072.3 745.7 L1072.4 747.4 L1072.5 756.5 L1072.6 758.4 L1072.7 738.9 L1072.8 751.4 L1072.8 748.5 L1072.9 742.9 L1073.0 735.5 L1073.1 746.1 L1073.2 741.1 L1073.3 747.2 L1073.4 755.5 L1073.5 750.3 L1073.6 744.3 L1073.7 740.4 L1073.8 745.5 L1073.8 754.6 L1073.9 755.4 L1074.0 741.7 L1074.1 743.3 L1074.2 739.3 L1074.3 736.5 L1074.4 753.4 L1074.5 742.6 L1074.6 747.2 L1074.7 756.0 L1074.8 735.9 L1074.8 746.7 L1074.9 738.9 L1075.0 744.3 L1075.1 759.7 L1075.2 749.7 L1075.3 741.3 L1075.4 754.6 L1075.5 750.2 L1075.6 746.1 L1075.7 750.2 L1075.8 735.1 L1075.8 754.9 L1075.9 738.9 L1076.0 750.6 L1076.1 744.6 L1076.2 761.4 L1076.3 746.0 L1076.4 740.4 L1076.5 752.5 L1076.6 740.1 L1076.7 725.3 L1076.8 751.7 L1076.8 743.4 L1076.9 747.8 L1077.0 742.2 L1077.1 740.8 L1077.2 745.6 L1077.3 757.9 L1077.4 738.9 L1077.5 748.9 L1077.6 755.0 L1077.7 742.8 L1077.8 748.3 L1077.8 764.3 L1077.9 749.6 L1078.0 743.1 L1078.1 746.5 L1078.2 744.7 L1078.3 743.9 L1078.4 756.1 L1078.5 746.4 L1078.6 740.9 L1078.7 747.6 L1078.8 743.0 L1078.9 748.4 L1078.9 739.1 L1079.0 742.1 L1079.1 742.4 L1079.2 754.9 L1079.3 750.7 L1079.4 740.2 L1079.5 742.3 L1079.6 750.2 L1079.7 739.3 L1079.8 751.6 L1079.9 746.8 L1079.9 743.1 L1080.0 754.4 L1080.1 752.6 L1080.2 751.5 L1080.3 749.3 L1080.4 755.8 L1080.5 742.1 L1080.6 749.5 L1080.7 746.3 L1080.8 749.3 L1080.9 750.7 L1080.9 742.1 L1081.0 750.7 L1081.1 757.8 L1081.2 749.0 L1081.3 750.3 L1081.4 748.6 L1081.5 764.7 L1081.6 749.1 L1081.7 749.8 L1081.8 746.6 L1081.9 739.8 L1081.9 752.9 L1082.0 753.9 L1082.1 733.3 L1082.2 744.7 L1082.3 737.2 L1082.4 748.5 L1082.5 742.8 L1082.6 745.2 L1082.7 738.7 L1082.8 747.0 L1082.9 752.9 L1082.9 739.8 L1083.0 750.9 L1083.1 756.1 L1083.2 745.8 L1083.3 757.6 L1083.4 750.1 L1083.5 735.9 L1083.6 753.4 L1083.7 735.8 L1083.8 744.7 L1083.9 742.9 L1083.9 737.4 L1084.0 743.1 L1084.1 745.8 L1084.2 749.9 L1084.3 743.9 L1084.4 752.1 L1084.5 754.2 L1084.6 758.9 L1084.7 757.7 L1084.8 739.5 L1084.9 743.9 L1084.9 743.3 L1085.0 743.2 L1085.1 756.3 L1085.2 741.1 L1085.3 748.1 L1085.4 754.9 L1085.5 746.1 L1085.6 753.6 L1085.7 750.4 L1085.8 740.8 L1085.9 738.9 L1086.0 754.2 L1086.0 753.4 L1086.1 746.3 L1086.2 751.9 L1086.3 744.5 L1086.4 748.1 L1086.5 747.2 L1086.6 742.8 L1086.7 748.8 L1086.8 747.2 L1086.9 733.8 L1087.0 740.6 L1087.0 743.3 L1087.1 746.5 L1087.2 743.0 L1087.3 745.7 L1087.4 743.1 L1087.5 756.9 L1087.6 738.7 L1087.7 738.2 L1087.8 750.6 L1087.9 749.0 L1088.0 741.5 L1088.0 747.2 L1088.1 741.0 L1088.2 744.9 L1088.3 752.5 L1088.4 746.0 L1088.5 754.6 L1088.6 740.2 L1088.7 746.5 L1088.8 756.4 L1088.9 743.7 L1089.0 746.9 L1089.0 741.5 L1089.1 742.9 L1089.2 736.6 L1089.3 735.5 L1089.4 744.0 L1089.5 756.3 L1089.6 750.0 L1089.7 755.0 L1089.8 740.7 L1089.9 751.3 L1090.0 755.7 L1090.0 742.2 L1090.1 764.0 L1090.2 748.1 L1090.3 747.3 L1090.4 746.5 L1090.5 743.3 L1090.6 751.4 L1090.7 747.3 L1090.8 754.0 L1090.9 756.2 L1091.0 748.8 L1091.0 751.6 L1091.1 763.0 L1091.2 750.0 L1091.3 750.7 L1091.4 752.7 L1091.5 735.0 L1091.6 745.1 L1091.7 751.5 L1091.8 752.9 L1091.9 741.2 L1092.0 761.0 L1092.0 744.0 L1092.1 741.0 L1092.2 748.0 L1092.3 748.0 L1092.4 759.9 L1092.5 745.7 L1092.6 748.1 L1092.7 738.5 L1092.8 751.8 L1092.9 757.6 L1093.0 742.4 L1093.1 755.4 L1093.1 747.1 L1093.2 749.9 L1093.3 746.3 L1093.4 733.6 L1093.5 751.3 L1093.6 749.7 L1093.7 752.1 L1093.8 742.1 L1093.9 748.9 L1094.0 745.2 L1094.1 753.4 L1094.1 747.6 L1094.2 735.6 L1094.3 742.8 L1094.4 745.9 L1094.5 744.8 L1094.6 735.0 L1094.7 748.6 L1094.8 745.1 L1094.9 733.9 L1095.0 744.2 L1095.1 750.3 L1095.1 746.7 L1095.2 750.0 L1095.3 744.7 L1095.4 752.9 L1095.5 746.7 L1095.6 732.1 L1095.7 754.8 L1095.8 742.4 L1095.9 757.3 L1096.0 738.7 L1096.1 740.4 L1096.1 759.5 L1096.2 758.4 L1096.3 752.0 L1096.4 769.8 L1096.5 741.4 L1096.6 750.1 L1096.7 749.1 L1096.8 757.1 L1096.9 749.9 L1097.0 747.9 L1097.1 735.9 L1097.1 750.8 L1097.2 757.0 L1097.3 753.5 L1097.4 750.7 L1097.5 753.4 L1097.6 750.6 L1097.7 753.8 L1097.8 749.3 L1097.9 746.7 L1098.0 741.1 L1098.1 751.4 L1098.1 748.3 L1098.2 748.8 L1098.3 747.9 L1098.4 745.7 L1098.5 742.2 L1098.6 745.5 L1098.7 746.7 L1098.8 755.9 L1098.9 746.1 L1099.0 755.9 L1099.1 758.7 L1099.2 754.0 L1099.2 741.8 L1099.3 743.5 L1099.4 743.5 L1099.5 734.3 L1099.6 742.2 L1099.7 746.4 L1099.8 757.3 L1099.9 738.0 L1100.0 752.8 L1100.1 735.7 L1100.2 750.1 L1100.2 743.2 L1100.3 742.0 L1100.4 753.5 L1100.5 742.1 L1100.6 745.9 L1100.7 756.6 L1100.8 755.9 L1100.9 742.7 L1101.0 744.6 L1101.1 747.9 L1101.2 743.2 L1101.2 742.9 L1101.3 741.7 L1101.4 736.6 L1101.5 744.9 L1101.6 750.9 L1101.7 740.6 L1101.8 744.3 L1101.9 743.8 L1102.0 738.8 L1102.1 740.2 L1102.2 749.4 L1102.2 755.4 L1102.3 751.0 L1102.4 733.5 L1102.5 735.6 L1102.6 743.2 L1102.7 742.8 L1102.8 753.5 L1102.9 751.2 L1103.0 741.7 L1103.1 746.5 L1103.2 749.9 L1103.2 752.1 L1103.3 737.0 L1103.4 743.6 L1103.5 743.4 L1103.6 744.7 L1103.7 737.0 L1103.8 727.9 L1103.9 753.5 L1104.0 750.5 L1104.1 748.2 L1104.2 755.7 L1104.2 743.1 L1104.3 749.1 L1104.4 748.8 L1104.5 739.4 L1104.6 747.5 L1104.7 737.5 L1104.8 748.4 L1104.9 745.7 L1105.0 750.4 L1105.1 746.9 L1105.2 747.5 L1105.2 757.4 L1105.3 747.7 L1105.4 751.3 L1105.5 751.1 L1105.6 746.3 L1105.7 747.1 L1105.8 747.1 L1105.9 740.7 L1106.0 764.0 L1106.1 742.7 L1106.2 756.1 L1106.3 752.6 L1106.3 751.6 L1106.4 754.2 L1106.5 750.1 L1106.6 752.5 L1106.7 741.0 L1106.8 745.3 L1106.9 745.2 L1107.0 751.9 L1107.1 731.1 L1107.2 758.0 L1107.3 756.8 L1107.3 749.3 L1107.4 758.0 L1107.5 756.0 L1107.6 747.3 L1107.7 744.2 L1107.8 746.5 L1107.9 740.1 L1108.0 746.4 L1108.1 743.3 L1108.2 746.1 L1108.3 734.7 L1108.3 737.8 L1108.4 748.5 L1108.5 742.6 L1108.6 743.7 L1108.7 755.3 L1108.8 749.4 L1108.9 742.5 L1109.0 743.9 L1109.1 749.5 L1109.2 740.6 L1109.3 745.2 L1109.3 750.3 L1109.4 756.4 L1109.5 741.3 L1109.6 743.3 L1109.7 756.8 L1109.8 750.9 L1109.9 749.3 L1110.0 753.7 L1110.1 746.9 L1110.2 754.7 L1110.3 744.4 L1110.3 744.6 L1110.4 740.1 L1110.5 740.1 L1110.6 742.4 L1110.7 746.6 L1110.8 734.5 L1110.9 747.9 L1111.0 749.8 L1111.1 747.1 L1111.2 750.2 L1111.3 743.9 L1111.3 747.4 L1111.4 739.3 L1111.5 744.6 L1111.6 749.4 L1111.7 749.4 L1111.8 749.7 L1111.9 742.4 L1112.0 740.8 L1112.1 745.3 L1112.2 752.0 L1112.3 757.3 L1112.3 757.1 L1112.4 752.6 L1112.5 750.0 L1112.6 750.6 L1112.7 736.8 L1112.8 751.5 L1112.9 755.5 L1113.0 752.0 L1113.1 754.8 L1113.2 764.2 L1113.3 746.3 L1113.4 745.4 L1113.4 745.7 L1113.5 761.5 L1113.6 746.5 L1113.7 760.1 L1113.8 741.4 L1113.9 754.1 L1114.0 743.5 L1114.1 748.1 L1114.2 762.0 L1114.3 753.9 L1114.4 747.2 L1114.4 740.8 L1114.5 749.3 L1114.6 753.2 L1114.7 752.6 L1114.8 748.9 L1114.9 748.3 L1115.0 752.5 L1115.1 754.3 L1115.2 736.8 L1115.3 755.0 L1115.4 751.7 L1115.4 754.1 L1115.5 747.2 L1115.6 751.5 L1115.7 737.2 L1115.8 745.9 L1115.9 752.2 L1116.0 742.9 L1116.1 744.6 L1116.2 743.5 L1116.3 753.3 L1116.4 749.5 L1116.4 739.1 L1116.5 749.4 L1116.6 749.1 L1116.7 741.5 L1116.8 735.5 L1116.9 745.6 L1117.0 736.3 L1117.1 746.9 L1117.2 743.8 L1117.3 745.6 L1117.4 747.2 L1117.4 741.7 L1117.5 742.4 L1117.6 742.4 L1117.7 744.9 L1117.8 746.2 L1117.9 742.5 L1118.0 744.1 L1118.1 738.7 L1118.2 743.0 L1118.3 759.1 L1118.4 750.5 L1118.4 738.1 L1118.5 744.9 L1118.6 735.2 L1118.7 733.7 L1118.8 744.6 L1118.9 743.0 L1119.0 734.4 L1119.1 751.8 L1119.2 746.6 L1119.3 748.0 L1119.4 745.7 L1119.4 746.7 L1119.5 762.1 L1119.6 749.2 L1119.7 743.7 L1119.8 742.5 L1119.9 755.3 L1120.0 746.4 L1120.1 742.1 L1120.2 749.1 L1120.3 753.0 L1120.4 739.1 L1120.5 751.1 L1120.5 743.1 L1120.6 751.2 L1120.7 748.4 L1120.8 757.5 L1120.9 731.8 L1121.0 743.4 L1121.1 744.6 L1121.2 750.8 L1121.3 750.9 L1121.4 757.1 L1121.5 747.4 L1121.5 744.8 L1121.6 743.8 L1121.7 745.3 L1121.8 736.9 L1121.9 762.9 L1122.0 760.5 L1122.1 751.3 L1122.2 740.7 L1122.3 740.0 L1122.4 731.7 L1122.5 750.0 L1122.5 756.0 L1122.6 742.6 L1122.7 736.1 L1122.8 745.2 L1122.9 750.0 L1123.0 738.4 L1123.1 737.3 L1123.2 757.7 L1123.3 749.6 L1123.4 736.7 L1123.5 751.4 L1123.5 744.9 L1123.6 743.7 L1123.7 749.5 L1123.8 755.9 L1123.9 739.9 L1124.0 754.7 L1124.1 750.4 L1124.2 738.8 L1124.3 759.6 L1124.4 757.7 L1124.5 739.3 L1124.5 748.1 L1124.6 756.2 L1124.7 744.3 L1124.8 754.1 L1124.9 747.5 L1125.0 745.6 L1125.1 743.4 L1125.2 753.5 L1125.3 748.8 L1125.4 757.6 L1125.5 748.1 L1125.5 744.5 L1125.6 742.6 L1125.7 745.8 L1125.8 752.5 L1125.9 755.6 L1126.0 735.9 L1126.1 740.9 L1126.2 746.5 L1126.3 738.8 L1126.4 730.7 L1126.5 734.1 L1126.6 752.6 L1126.6 755.5 L1126.7 747.6 L1126.8 755.3 L1126.9 753.5 L1127.0 743.8 L1127.1 759.7 L1127.2 749.0 L1127.3 748.6 L1127.4 748.6 L1127.5 753.7 L1127.6 757.9 L1127.6 748.0 L1127.7 738.7 L1127.8 751.9 L1127.9 763.1 L1128.0 762.9 L1128.1 736.8 L1128.2 746.0 L1128.3 740.3 L1128.4 742.2 L1128.5 747.3 L1128.6 740.9 L1128.6 744.2 L1128.7 752.0 L1128.8 739.6 L1128.9 752.4 L1129.0 739.5 L1129.1 752.3 L1129.2 753.4 L1129.3 752.3 L1129.4 746.3 L1129.5 747.5 L1129.6 743.6 L1129.6 744.1 L1129.7 734.0 L1129.8 757.6 L1129.9 744.6 L1130.0 742.3 L1130.1 751.7 L1130.2 746.2 L1130.3 746.1 L1130.4 743.0 L1130.5 745.8 L1130.6 750.4 L1130.6 757.5 L1130.7 754.6 L1130.8 745.8 L1130.9 740.3 L1131.0 743.8 L1131.1 746.7 L1131.2 755.3 L1131.3 743.4 L1131.4 743.0 L1131.5 733.1 L1131.6 768.1 L1131.6 757.4 L1131.7 755.7 L1131.8 746.6 L1131.9 751.3 L1132.0 755.3 L1132.1 754.9 L1132.2 751.4 L1132.3 747.6 L1132.4 736.6 L1132.5 747.1 L1132.6 755.9 L1132.6 750.6 L1132.7 742.1 L1132.8 747.4 L1132.9 745.2 L1133.0 759.6 L1133.1 750.9 L1133.2 764.5 L1133.3 752.2 L1133.4 748.6 L1133.5 747.9 L1133.6 748.2 L1133.7 748.0 L1133.7 758.9 L1133.8 731.1 L1133.9 743.0 L1134.0 752.1 L1134.1 746.2 L1134.2 744.7 L1134.3 744.1 L1134.4 743.5 L1134.5 743.6 L1134.6 751.9 L1134.7 736.9 L1134.7 758.2 L1134.8 741.4 L1134.9 747.4 L1135.0 746.2 L1135.1 756.8 L1135.2 740.5 L1135.3 737.8 L1135.4 749.3 L1135.5 749.2 L1135.6 751.8 L1135.7 744.4 L1135.7 751.7 L1135.8 746.5 L1135.9 746.7 L1136.0 746.2 L1136.1 750.1 L1136.2 751.6 L1136.3 750.3 L1136.4 738.4 L1136.5 748.2 L1136.6 753.7 L1136.7 743.4 L1136.7 747.8 L1136.8 745.9 L1136.9 735.7 L1137.0 750.2 L1137.1 745.1 L1137.2 746.4 L1137.3 749.6 L1137.4 743.0 L1137.5 751.2 L1137.6 746.7 L1137.7 753.5 L1137.7 752.3 L1137.8 748.4 L1137.9 743.6 L1138.0 752.2 L1138.1 735.5 L1138.2 737.2 L1138.3 745.7 L1138.4 752.6 L1138.5 753.2 L1138.6 744.2 L1138.7 742.0 L1138.7 736.7 L1138.8 746.7 L1138.9 758.6 L1139.0 744.4 L1139.1 741.5 L1139.2 748.4 L1139.3 749.7 L1139.4 746.8 L1139.5 753.0 L1139.6 741.1 L1139.7 747.0 L1139.7 741.8 L1139.8 750.3 L1139.9 748.4 L1140.0 744.2 L1140.1 749.2 L1140.2 745.1 L1140.3 737.7 L1140.4 746.4 L1140.5 745.2 L1140.6 753.3 L1140.7 740.0 L1140.8 749.9 L1140.8 754.5 L1140.9 746.2 L1141.0 741.1 L1141.1 752.1 L1141.2 751.6 L1141.3 744.1 L1141.4 755.8 L1141.5 747.2 L1141.6 760.1 L1141.7 742.0 L1141.8 740.2 L1141.8 745.8 L1141.9 741.8 L1142.0 743.8 L1142.1 736.8 L1142.2 761.1 L1142.3 751.7 L1142.4 739.2 L1142.5 746.8 L1142.6 745.1 L1142.7 738.3 L1142.8 745.7 L1142.8 757.9 L1142.9 752.4 L1143.0 747.1 L1143.1 751.4 L1143.2 737.4 L1143.3 742.5 L1143.4 746.2 L1143.5 735.4 L1143.6 758.5 L1143.7 751.0 L1143.8 744.3 L1143.8 741.6 L1143.9 744.6 L1144.0 749.1 L1144.1 753.9 L1144.2 747.3 L1144.3 743.2 L1144.4 748.7 L1144.5 749.3 L1144.6 750.2 L1144.7 752.9 L1144.8 745.3 L1144.8 742.7 L1144.9 737.3 L1145.0 756.7 L1145.1 743.1 L1145.2 744.7 L1145.3 749.3 L1145.4 732.1 L1145.5 754.4 L1145.6 748.7 L1145.7 746.6 L1145.8 747.2 L1145.8 744.0 L1145.9 744.6 L1146.0 742.5 L1146.1 749.8 L1146.2 748.1 L1146.3 740.2 L1146.4 749.7 L1146.5 747.1 L1146.6 745.7 L1146.7 757.1 L1146.8 753.2 L1146.8 741.5 L1146.9 754.2 L1147.0 748.3 L1147.1 747.4 L1147.2 762.4 L1147.3 735.0 L1147.4 741.7 L1147.5 736.1 L1147.6 753.2 L1147.7 754.6 L1147.8 753.6 L1147.9 746.1 L1147.9 745.3 L1148.0 757.3 L1148.1 747.4 L1148.2 747.1 L1148.3 751.7 L1148.4 745.2 L1148.5 740.2 L1148.6 743.2 L1148.7 762.7 L1148.8 734.1 L1148.9 750.6 L1148.9 734.6 L1149.0 742.3 L1149.1 740.4 L1149.2 748.0 L1149.3 745.8 L1149.4 740.1 L1149.5 742.2 L1149.6 746.0 L1149.7 748.2 L1149.8 742.9 L1149.9 735.8 L1149.9 753.2 L1150.0 754.8 L1150.1 751.8 L1150.2 748.2 L1150.3 749.0 L1150.4 747.0 L1150.5 746.6 L1150.6 747.7 L1150.7 739.3 L1150.8 745.0 L1150.9 742.0 L1150.9 744.1 L1151.0 746.7 L1151.1 753.8 L1151.2 749.3 L1151.3 751.6 L1151.4 744.6 L1151.5 747.7 L1151.6 750.3 L1151.7 750.1 L1151.8 751.7 L1151.9 744.1 L1151.9 730.0 L1152.0 746.7 L1152.1 751.1 L1152.2 758.0 L1152.3 737.2 L1152.4 747.0 L1152.5 749.3 L1152.6 750.6 L1152.7 738.2 L1152.8 742.5 L1152.9 752.3 L1152.9 743.9 L1153.0 735.8 L1153.1 753.3 L1153.2 743.8 L1153.3 736.8 L1153.4 741.7 L1153.5 746.4 L1153.6 737.4 L1153.7 746.8 L1153.8 744.3 L1153.9 739.9 L1154.0 748.6 L1154.0 742.7 L1154.1 746.9 L1154.2 751.9 L1154.3 753.1 L1154.4 753.3 L1154.5 743.5 L1154.6 749.2 L1154.7 739.1 L1154.8 739.9 L1154.9 754.4 L1155.0 738.3 L1155.0 747.9 L1155.1 744.4 L1155.2 737.7 L1155.3 752.8 L1155.4 726.7 L1155.5 749.8 L1155.6 746.1 L1155.7 744.9 L1155.8 746.7 L1155.9 742.0 L1156.0 744.9 L1156.0 756.8 L1156.1 745.5 L1156.2 737.3 L1156.3 758.1 L1156.4 735.8 L1156.5 745.3 L1156.6 749.7 L1156.7 750.8 L1156.8 748.3 L1156.9 735.5 L1157.0 759.4 L1157.0 748.1 L1157.1 758.1 L1157.2 744.3 L1157.3 741.5 L1157.4 740.9 L1157.5 747.3 L1157.6 744.2 L1157.7 754.0 L1157.8 736.7 L1157.9 759.5 L1158.0 738.8 L1158.0 758.9 L1158.1 749.3 L1158.2 744.4 L1158.3 745.9 L1158.4 760.3 L1158.5 752.6 L1158.6 744.0 L1158.7 756.8 L1158.8 760.3 L1158.9 738.6 L1159.0 738.7 L1159.0 744.3 L1159.1 756.8 L1159.2 744.5 L1159.3 755.2 L1159.4 743.0 L1159.5 754.7 L1159.6 736.3 L1159.7 758.1 L1159.8 738.5 L1159.9 744.2 L1160.0 740.9 L1160.0 747.9 L1160.1 740.6 L1160.2 746.2 L1160.3 751.4 L1160.4 749.6 L1160.5 746.4 L1160.6 747.5 L1160.7 750.5 L1160.8 735.7 L1160.9 747.0 L1161.0 742.9 L1161.1 748.5 L1161.1 743.1 L1161.2 748.3 L1161.3 760.0 L1161.4 745.4 L1161.5 734.4 L1161.6 743.0 L1161.7 752.3 L1161.8 757.8 L1161.9 739.1 L1162.0 748.7 L1162.1 737.3 L1162.1 739.1 L1162.2 749.8 L1162.3 747.1 L1162.4 738.9 L1162.5 753.8 L1162.6 750.3 L1162.7 746.7 L1162.8 745.8 L1162.9 746.8 L1163.0 747.5 L1163.1 749.2 L1163.1 752.0 L1163.2 747.8 L1163.3 745.1 L1163.4 751.0 L1163.5 748.8 L1163.6 742.1 L1163.7 740.7 L1163.8 751.2 L1163.9 743.1 L1164.0 747.0 L1164.1 740.1 L1164.1 747.7 L1164.2 764.0 L1164.3 752.8 L1164.4 747.5 L1164.5 742.9 L1164.6 737.3 L1164.7 745.8 L1164.8 743.4 L1164.9 753.5 L1165.0 751.1 L1165.1 746.9 L1165.1 747.0 L1165.2 741.9 L1165.3 746.9 L1165.4 741.4 L1165.5 757.4 L1165.6 751.3 L1165.7 732.4 L1165.8 754.9 L1165.9 743.4 L1166.0 747.1 L1166.1 750.3 L1166.1 741.9 L1166.2 735.5 L1166.3 747.7 L1166.4 736.4 L1166.5 752.5 L1166.6 745.3 L1166.7 738.3 L1166.8 750.1 L1166.9 742.4 L1167.0 744.5 L1167.1 745.5 L1167.1 731.5 L1167.2 750.0 L1167.3 750.5 L1167.4 749.9 L1167.5 745.3 L1167.6 739.1 L1167.7 746.7 L1167.8 752.1 L1167.9 743.7 L1168.0 741.4 L1168.1 756.8 L1168.2 741.1 L1168.2 754.7 L1168.3 735.9 L1168.4 752.6 L1168.5 756.0 L1168.6 741.5 L1168.7 746.4 L1168.8 744.6 L1168.9 740.1 L1169.0 747.0 L1169.1 747.7 L1169.2 740.8 L1169.2 747.6 L1169.3 748.7 L1169.4 749.7 L1169.5 752.9 L1169.6 739.7 L1169.7 745.3 L1169.8 747.0 L1169.9 750.9 L1170.0 750.5 L1170.1 760.6 L1170.2 744.5 L1170.2 732.6 L1170.3 747.1 L1170.4 740.8 L1170.5 748.8 L1170.6 750.6 L1170.7 755.5 L1170.8 742.8 L1170.9 748.1 L1171.0 744.6 L1171.1 746.1 L1171.2 757.3 L1171.2 745.9 L1171.3 741.1 L1171.4 745.1 L1171.5 739.3 L1171.6 741.1 L1171.7 754.6 L1171.8 745.7 L1171.9 756.2 L1172.0 751.1 L1172.1 744.1 L1172.2 738.7 L1172.2 741.6 L1172.3 748.0 L1172.4 745.7 L1172.5 755.7 L1172.6 736.3 L1172.7 751.5 L1172.8 752.2 L1172.9 736.9 L1173.0 743.3 L1173.1 750.6 L1173.2 748.5 L1173.2 753.4 L1173.3 756.5 L1173.4 742.5 L1173.5 732.4 L1173.6 766.3 L1173.7 755.3 L1173.8 747.0 L1173.9 737.9 L1174.0 750.9 L1174.1 747.6 L1174.2 745.1 L1174.2 745.0 L1174.3 734.2 L1174.4 757.8 L1174.5 740.3 L1174.6 745.3 L1174.7 753.9 L1174.8 751.8 L1174.9 755.2 L1175.0 752.3 L1175.1 746.8 L1175.2 746.1 L1175.3 752.0 L1175.3 766.8 L1175.4 733.4 L1175.5 756.9 L1175.6 749.5 L1175.7 736.3 L1175.8 748.1 L1175.9 748.9 L1176.0 751.4 L1176.1 745.8 L1176.2 747.7 L1176.3 752.0 L1176.3 755.0 L1176.4 749.8 L1176.5 759.6 L1176.6 753.7 L1176.7 739.1 L1176.8 740.9 L1176.9 750.2 L1177.0 746.7 L1177.1 741.6 L1177.2 749.5 L1177.3 750.9 L1177.3 750.6 L1177.4 738.0 L1177.5 738.7 L1177.6 738.6 L1177.7 741.1 L1177.8 742.4 L1177.9 747.9 L1178.0 741.6 L1178.1 744.8 L1178.2 729.9 L1178.3 733.9 L1178.3 744.0 L1178.4 744.6 L1178.5 723.5 L1178.6 741.0 L1178.7 749.2 L1178.8 748.6 L1178.9 740.2 L1179.0 746.6 L1179.1 748.6 L1179.2 734.8 L1179.3 745.9 L1179.3 751.8 L1179.4 742.0 L1179.5 747.0 L1179.6 744.3 L1179.7 743.2 L1179.8 745.4 L1179.9 737.6 L1180.0 759.9 L1180.1 741.3 L1180.2 744.1 L1180.3 753.9 L1180.3 754.7 L1180.4 745.8 L1180.5 740.4 L1180.6 748.2 L1180.7 750.5 L1180.8 745.5 L1180.9 737.8 L1181.0 753.9 L1181.1 752.2 L1181.2 757.2 L1181.3 755.9 L1181.4 738.7 L1181.4 747.0 L1181.5 746.8 L1181.6 752.1 L1181.7 756.6 L1181.8 754.3 L1181.9 750.6 L1182.0 748.8 L1182.1 747.6 L1182.2 759.1 L1182.3 751.9 L1182.4 742.1 L1182.4 746.4 L1182.5 753.6 L1182.6 747.8 L1182.7 748.6 L1182.8 750.5 L1182.9 752.9 L1183.0 752.0 L1183.1 745.1 L1183.2 756.1 L1183.3 749.2 L1183.4 752.0 L1183.4 741.8 L1183.5 750.2 L1183.6 751.4 L1183.7 751.0 L1183.8 740.8 L1183.9 755.5" fill="none" stroke="#0000ff" stroke-width="1.9" stroke-linejoin="round"/>
<rect x="1108.7" y="520.2" width="73.5" height="15.7" rx="2" ry="2" fill="#fff" fill-opacity="0.8" stroke="#cccccc" stroke-width="1.1"/>
<line x1="1111.10" y1="528.10" x2="1133.70" y2="528.10" stroke="#0000ff" stroke-width="1.39"/>
<text x="0.00 5.17 12.50 18.06 23.62 29.18" y="0" font-size="10.50" transform="translate(1137.60 531.10) translate(-0.00 0) scale(1.1442 1)">y=1500</text>
<rect x="1108.7" y="692.0" width="73.2" height="15.5" rx="2" ry="2" fill="#fff" fill-opacity="0.8" stroke="#cccccc" stroke-width="1.1"/>
<line x1="1111.10" y1="699.80" x2="1133.70" y2="699.80" stroke="#0000ff" stroke-width="1.39"/>
<text x="0.00 5.17 12.50 18.06 23.62 29.18" y="0" font-size="10.50" transform="translate(1137.60 702.90) translate(-0.00 0) scale(1.1442 1)">x=1072</text>
<rect x="911.00" y="112.90" width="274.00" height="119.90" fill="none" stroke="#000" stroke-width="1.55"/>
<rect x="911.00" y="285.00" width="274.00" height="119.60" fill="none" stroke="#000" stroke-width="1.55"/>
<rect x="911.00" y="516.70" width="274.00" height="120.30" fill="none" stroke="#000" stroke-width="1.55"/>
<rect x="911.00" y="688.70" width="274.00" height="120.00" fill="none" stroke="#000" stroke-width="1.55"/>
</svg>

<script>
(function(){
var c=document.getElementById('img'); if(!c||!c.getContext) return;
var ctx=c.getContext('2d'); var W=c.width,H=c.height;
var im=ctx.createImageData(W,H); var d=im.data;
var hs=[0.48,0.84,2.04,2.30,3.26,3.52,4.34,4.37,5.14,5.08,5.72,5.58,5.98,6.11,5.79,6.06,5.55,5.79,5.19,5.24,4.65,4.53,3.85,3.75,2.95,2.95,2.36,2.52,2.15,2.39,2.10,2.39,2.01,2.27,1.93,2.19,2.01,2.10,3.88];
var cdf=[],s=0,i;
for(i=0;i<hs.length;i++){s+=Math.pow(10,hs[i]);cdf.push(s);}
for(i=0;i<cdf.length;i++)cdf[i]/=s;
var seed=987654321;
function rnd(){seed^=seed<<13;seed>>>=0;seed^=seed>>>17;seed^=seed<<5;seed>>>=0;return seed/4294967296;}
var VMIN=995.73,VMAX=1008.27,SHIFT=1.0,SPREAD=1.2;
for(var y=0;y<H;y++){for(var x=0;x<W;x++){
  var u=rnd(),k=0; while(k<cdf.length-1&&cdf[k]<u)k++;
  var v=980+1.513*(k+rnd()); v=1001.3+(v-1001.3)*SPREAD+SHIFT;
  if(x<1||y<1)v-=4; if(x<3)v-=1.5; if(x>=W-2||y>=H-1)v-=7; else if(x>=W-5)v-=2;
  var t=(v-VMIN)/(VMAX-VMIN); if(t<0)t=0; if(t>1)t=1;
  var r=t<0.365079?0.0416+t/0.365079*0.9584:1;
  var g=t<0.365079?0:(t<0.746032?(t-0.365079)/0.380953:1);
  var b=t<0.746032?0:(t-0.746032)/0.253968;
  var p=(y*W+x)*4; d[p]=r*255|0; d[p+1]=g*255|0; d[p+2]=b*255|0; d[p+3]=255;
}}
ctx.putImageData(im,0,0);
})();
</script>
</body></html>
